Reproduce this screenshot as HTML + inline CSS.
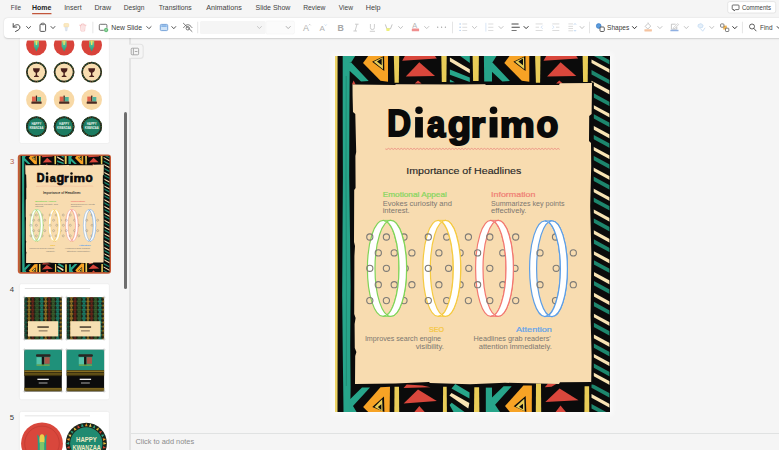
<!DOCTYPE html>
<html lang="en"><head><meta charset="utf-8"><title>PowerPoint</title>
<style>
html,body{margin:0;padding:0;background:#f5f5f5;}
body{width:779px;height:450px;overflow:hidden;position:relative;font-family:"Liberation Sans",sans-serif;}
#app{position:absolute;left:0;top:0;width:779px;height:450px;overflow:hidden;background:#f5f5f5;}
#topbar{position:absolute;left:0;top:0;width:779px;height:17.5px;background:#f5f5f5;}
#ribbon{position:absolute;left:3.9px;top:17.5px;width:790px;height:20.2px;background:#ffffff;border-radius:4px;box-shadow:0 0.5px 1.6px rgba(0,0,0,.16);}
#left{position:absolute;left:0;top:37.7px;width:130px;height:412.3px;background:#f5f5f5;overflow:hidden;}
#divider{position:absolute;left:129.4px;top:37.7px;width:1.2px;height:412.3px;background:#e3e3e3;}
#scroll{position:absolute;left:123.5px;top:112px;width:3.1px;height:177px;border-radius:1.6px;background:#6e6e6e;}
#canvas{position:absolute;left:130.5px;top:37.7px;width:648.5px;height:395.6px;background:#f5f5f5;}
#slidewrap{position:absolute;left:335px;top:56px;width:275px;height:356px;box-shadow:0 0 5px 3px rgba(255,255,255,.6);}
#notes{position:absolute;left:130.5px;top:433.3px;width:648.5px;height:16.7px;background:#f5f5f5;border-top:1.1px solid #e0e2e2;}
svg{position:absolute;left:0;top:0;overflow:hidden;}
svg text{font-family:"Liberation Sans",sans-serif;}
</style></head><body>
<div id="app">
<div id="canvas"></div>
<div id="left"></div>
<div id="divider"></div>
<div id="notes"></div>
<svg id="panel" width="779" height="450" viewBox="0 0 779 450">
<defs>
<linearGradient id="corng" x1="0" y1="0" x2="0" y2="1"><stop offset="0" stop-color="#d8d860"/><stop offset="0.35" stop-color="#56c296"/><stop offset="1" stop-color="#1f9a80"/></linearGradient>
<g id="slideg">
<rect x="0" y="0" width="275" height="356" fill="#0b0b0b"/>
<polygon points="0.0,0.0 2.6,0.0 2.4,120.0 2.7,240.0 2.5,356.0 0.0,356.0" fill="#ecd366" />
<polygon points="18.6,24.4 17.0,28.6 20.6,28.6" fill="#d9473c" />
<polygon points="7.7,0.0 14.8,0.0 14.4,60.0 14.2,120.0 15.0,180.0 15.6,230.0 15.2,290.0 15.6,330.0 15.3,356.0 8.5,356.0 7.8,300.0 7.2,240.0 7.5,180.0 7.9,120.0 7.7,60.0" fill="#27a58a" />
<path d="M11.2 20 L11.0 120 L11.4 220 L11.3 330" stroke="#14705d" stroke-width="0.5" fill="none"/>
<g transform="translate(7.6,0)"><polygon points="6.2,0.0 12.6,0.0 8.5,6.6 6.2,6.6" fill="#27a58a" /><polygon points="6.2,6.5 8.6,6.5 26.1,25.0 18.4,25.4 7.2,15.1 6.2,15.1" fill="#27a58a" /><polygon points="20.4,7.0 25.6,0.0 45.4,0.0 45.4,25.8 37.9,24.8" fill="#f7a325" /><polygon points="29.5,5.8 41.5,0.0 41.7,14.9" fill="#0b0b0b" /><polygon points="31.1,5.8 40.1,1.3 40.4,13.2" fill="#e9cd58" /><polygon points="34.4,5.5 39.1,2.5 39.1,9.2" fill="#0b0b0b" /><polygon points="51.2,0.0 56.6,0.0 56.2,26.7 52.0,26.7" fill="#e9cd58" /><polygon points="59.6,4.7 62.3,0.0 92.4,0.0 94.2,2.5" fill="#d9473c" /><polygon points="76.7,6.3 63.2,20.5 92.4,20.0" fill="#d9473c" /><polygon points="75.4,24.5 72.2,27.6 79.0,27.6" fill="#d9473c" /><polygon points="98.7,0.0 104.1,0.0 103.8,25.9 99.2,25.9" fill="#e9cd58" /><polygon points="107.3,1.6 127.2,13.3 127.2,17.3 107.3,5.6" fill="#f9e4b4" /><polygon points="117.6,0.0 127.2,0.0 127.2,7.0" fill="#27a58a" /><polygon points="107.3,13.4 127.2,21.5 127.2,26.0 107.3,18.7" fill="#27a58a" /><polygon points="107.3,23.6 112.2,26.3 107.3,26.3" fill="#27a58a" /><polygon points="130.0,0.0 136.3,0.0 136.0,25.0 130.5,25.0" fill="#e9cd58" /></g>
<g transform="translate(148.9,0)"><polygon points="0.0,0.0 8.1,0.0 8.1,25.4 0.3,25.4" fill="#27a58a" /><polygon points="6.2,0.0 12.6,0.0 8.5,6.6 6.2,6.6" fill="#27a58a" /><polygon points="6.2,6.5 8.6,6.5 26.1,25.0 18.4,25.4 7.2,15.1 6.2,15.1" fill="#27a58a" /><polygon points="20.4,7.0 25.6,0.0 45.4,0.0 45.4,25.8 37.9,24.8" fill="#f7a325" /><polygon points="29.5,5.8 41.5,0.0 41.7,14.9" fill="#0b0b0b" /><polygon points="31.1,5.8 40.1,1.3 40.4,13.2" fill="#e9cd58" /><polygon points="34.4,5.5 39.1,2.5 39.1,9.2" fill="#0b0b0b" /><polygon points="51.2,0.0 56.6,0.0 56.2,26.7 52.0,26.7" fill="#e9cd58" /><polygon points="59.6,4.7 62.3,0.0 92.4,0.0 94.2,2.5" fill="#d9473c" /><polygon points="76.7,6.3 63.2,20.5 92.4,20.0" fill="#d9473c" /><polygon points="75.4,24.5 72.2,27.6 79.0,27.6" fill="#d9473c" /><polygon points="98.7,0.0 104.1,0.0 103.8,25.9 99.2,25.9" fill="#e9cd58" /></g>
<polygon points="14.2,342.9 15.3,342.9 27.0,331.4 35.0,331.4 18.0,350.0 21.6,356.0 14.2,356.0" fill="#27a58a" />
<polygon points="45.5,331.2 55.0,330.8 54.6,356.0 33.2,356.0 28.1,351.0" fill="#f7a325" />
<polygon points="37.3,351.0 49.0,340.6 49.4,356.0" fill="#0b0b0b" />
<polygon points="39.5,351.0 47.2,343.3 47.6,355.4" fill="#e9cd58" />
<polygon points="42.9,351.0 46.3,348.3 46.3,354.1" fill="#0b0b0b" />
<polygon points="59.5,330.7 64.0,330.7 64.2,356.0 59.3,356.0" fill="#e9cd58" />
<polygon points="68.6,332.1 71.7,328.5 87.5,329.4 95.5,331.2" fill="#d9473c" />
<polygon points="83.0,333.4 68.6,347.4 101.8,345.1" fill="#d9473c" />
<polygon points="84.3,350.0 79.4,356.0 89.7,356.0" fill="#d9473c" />
<polygon points="108.1,330.7 111.7,330.7 111.9,356.0 107.9,356.0" fill="#e9cd58" />
<polygon points="116.5,332.5 120.3,328.0 134.6,336.5 134.4,342.5" fill="#27a58a" />
<polygon points="114.4,339.5 116.5,337.0 134.4,347.0 133.3,352.5" fill="#f9e4b4" />
<polygon points="114.6,349.0 116.7,346.8 129.5,356.0 118.5,356.0" fill="#27a58a" />
<polygon points="139.3,331.2 144.1,331.2 144.4,356.0 139.0,356.0" fill="#e9cd58" />
<polygon points="150.8,331.6 157.0,331.6 157.0,356.0 150.8,356.0" fill="#27a58a" />
<polygon points="157.0,341.5 168.6,330.3 176.7,330.3 160.1,348.7 165.0,356.0 157.0,356.0" fill="#27a58a" />
<polygon points="188.4,329.4 196.9,329.4 196.8,356.0 174.9,356.0 170.0,350.0" fill="#f7a325" />
<polygon points="178.7,350.3 190.7,340.0 191.3,356.0" fill="#0b0b0b" />
<polygon points="180.7,350.7 189.3,342.7 189.7,355.3" fill="#e9cd58" />
<polygon points="184.0,350.7 188.0,347.7 188.0,353.3" fill="#0b0b0b" />
<polygon points="201.0,327.6 206.0,327.6 206.2,356.0 200.8,356.0" fill="#e9cd58" />
<polygon points="209.8,331.2 213.0,327.6 222.0,327.6 216.6,330.7" fill="#d9473c" />
<polygon points="224.6,332.5 210.3,346.0 243.5,344.2" fill="#d9473c" />
<polygon points="225.5,349.6 220.6,356.0 230.9,356.0" fill="#d9473c" />
<polygon points="249.6,330.3 254.1,330.3 254.3,356.0 249.4,356.0" fill="#e9cd58" />
<polygon points="256.5,-5.6 274.7,4.2 274.7,8.6 256.5,-1.3" fill="#1d866d" />
<polygon points="256.5,-14.6 274.7,-4.8 274.7,-1.0 256.5,-11.0" fill="#f9e4b4" />
<polygon points="256.5,14.1 274.7,23.9 274.7,28.3 256.5,18.4" fill="#1d866d" />
<polygon points="256.5,3.5 274.7,13.3 274.7,17.1 256.5,7.1" fill="#f9e4b4" />
<polygon points="256.5,36.1 274.7,45.9 274.7,50.3 256.5,40.4" fill="#1d866d" />
<polygon points="256.5,24.8 274.7,34.6 274.7,38.4 256.5,28.4" fill="#f9e4b4" />
<polygon points="256.5,57.0 274.7,66.8 274.7,71.2 256.5,61.3" fill="#1d866d" />
<polygon points="256.5,48.0 274.7,57.8 274.7,61.6 256.5,51.6" fill="#f9e4b4" />
<polygon points="256.5,77.8 274.7,87.6 274.7,92.0 256.5,82.1" fill="#1d866d" />
<polygon points="256.5,68.8 274.7,78.6 274.7,82.4 256.5,72.4" fill="#f9e4b4" />
<polygon points="256.5,98.7 274.7,108.5 274.7,112.9 256.5,103.0" fill="#1d866d" />
<polygon points="256.5,89.7 274.7,99.5 274.7,103.3 256.5,93.3" fill="#f9e4b4" />
<polygon points="256.5,119.5 274.7,129.3 274.7,133.7 256.5,123.8" fill="#1d866d" />
<polygon points="256.5,110.5 274.7,120.3 274.7,124.1 256.5,114.1" fill="#f9e4b4" />
<polygon points="256.5,140.4 274.7,150.2 274.7,154.6 256.5,144.7" fill="#1d866d" />
<polygon points="256.5,131.4 274.7,141.2 274.7,145.0 256.5,135.0" fill="#f9e4b4" />
<polygon points="256.5,161.2 274.7,171.0 274.7,175.4 256.5,165.5" fill="#1d866d" />
<polygon points="256.5,152.2 274.7,162.0 274.7,165.8 256.5,155.8" fill="#f9e4b4" />
<polygon points="256.5,182.1 274.7,191.9 274.7,196.3 256.5,186.4" fill="#1d866d" />
<polygon points="256.5,173.1 274.7,182.9 274.7,186.7 256.5,176.7" fill="#f9e4b4" />
<polygon points="256.5,202.9 274.7,212.7 274.7,217.1 256.5,207.2" fill="#1d866d" />
<polygon points="256.5,193.9 274.7,203.7 274.7,207.5 256.5,197.5" fill="#f9e4b4" />
<polygon points="256.5,223.8 274.7,233.6 274.7,238.0 256.5,228.1" fill="#1d866d" />
<polygon points="256.5,214.8 274.7,224.6 274.7,228.4 256.5,218.4" fill="#f9e4b4" />
<polygon points="256.5,244.6 274.7,254.4 274.7,258.8 256.5,248.9" fill="#1d866d" />
<polygon points="256.5,235.6 274.7,245.4 274.7,249.2 256.5,239.2" fill="#f9e4b4" />
<polygon points="256.5,265.5 274.7,275.3 274.7,279.7 256.5,269.8" fill="#1d866d" />
<polygon points="256.5,256.5 274.7,266.3 274.7,270.1 256.5,260.1" fill="#f9e4b4" />
<polygon points="256.5,286.3 274.7,296.1 274.7,300.5 256.5,290.6" fill="#1d866d" />
<polygon points="256.5,277.3 274.7,287.1 274.7,290.9 256.5,280.9" fill="#f9e4b4" />
<polygon points="256.5,306.2 274.7,316.0 274.7,320.4 256.5,310.5" fill="#1d866d" />
<polygon points="256.5,296.7 274.7,306.5 274.7,310.3 256.5,300.3" fill="#f9e4b4" />
<polygon points="256.5,327.5 274.7,337.3 274.7,341.7 256.5,331.8" fill="#1d866d" />
<polygon points="256.5,315.5 274.7,325.3 274.7,329.1 256.5,319.1" fill="#f9e4b4" />
<polygon points="256.5,348.1 274.7,357.9 274.7,362.3 256.5,352.4" fill="#1d866d" />
<polygon points="256.5,338.1 274.7,347.9 274.7,351.7 256.5,341.7" fill="#f9e4b4" />
<polygon points="256.5,369.7 274.7,379.5 274.7,383.9 256.5,374.0" fill="#1d866d" />
<polygon points="256.5,360.7 274.7,370.5 274.7,374.3 256.5,364.3" fill="#f9e4b4" />
<rect x="274.6" y="0" width="0.4" height="356" fill="#0b0b0b"/>
<polygon points="255.5,26.5 258.9,26.5 258.7,120.0 259.0,220.0 258.8,328.5 255.5,328.5" fill="#0b0b0b" />
<polygon points="17.5,28.6 60.0,28.9 61.0,28.3 120.0,28.6 150.0,28.2 151.0,28.9 224.0,29.0 225.0,27.2 257.0,26.9 256.6,58.0 254.2,60.0 254.0,85.0 256.0,87.0 256.2,110.0 255.2,150.0 256.4,200.0 255.6,260.0 256.6,300.0 256.2,326.0 225.0,326.2 224.0,328.0 170.0,326.8 135.0,328.3 95.0,327.0 94.0,326.0 60.0,327.6 20.0,327.9 20.2,300.0 21.4,296.0 19.8,292.0 19.6,268.0 20.6,262.0 19.2,258.0 19.4,200.0 20.0,190.0 19.0,186.0 19.2,134.0 20.6,132.0 20.4,100.0 21.2,96.0 20.3,58.0 18.0,56.0 17.6,40.0" fill="#f8dcb0" />
<text transform="matrix(0.3281 0 0 0.3661 52.25 80.45)" x="0" y="0" font-size="100" font-weight="bold" fill="#0a0a0a" stroke="#0a0a0a" stroke-width="5.76" stroke-linejoin="miter">D</text>
<rect x="80.1" y="61.1" width="7.8" height="20.4" fill="#0a0a0a"/>
<circle cx="84.00" cy="54.3" r="3.75" fill="#0a0a0a"/>
<text transform="matrix(0.3283 0 0 0.3614 91.90 80.69)" x="0" y="0" font-size="100" font-weight="bold" fill="#0a0a0a" stroke="#0a0a0a" stroke-width="5.80" stroke-linejoin="miter">a</text>
<text transform="matrix(0.3832 0 0 0.3732 112.74 81.30)" x="0" y="0" font-size="100" font-weight="bold" fill="#0a0a0a" stroke="#0a0a0a" stroke-width="5.29" stroke-linejoin="miter">g</text>
<text transform="matrix(0.3722 0 0 0.3588 135.66 80.52)" x="0" y="0" font-size="100" font-weight="bold" fill="#0a0a0a" stroke="#0a0a0a" stroke-width="5.47" stroke-linejoin="miter">r</text>
<rect x="154.6" y="61.1" width="7.9" height="20.4" fill="#0a0a0a"/>
<circle cx="158.55" cy="54.3" r="3.75" fill="#0a0a0a"/>
<text transform="matrix(0.3943 0 0 0.3598 164.84 80.55)" x="0" y="0" font-size="100" font-weight="bold" fill="#0a0a0a" stroke="#0a0a0a" stroke-width="5.30" stroke-linejoin="miter">m</text>
<text transform="matrix(0.3568 0 0 0.3628 201.40 80.73)" x="0" y="0" font-size="100" font-weight="bold" fill="#0a0a0a" stroke="#0a0a0a" stroke-width="5.56" stroke-linejoin="miter">o</text>
<path d="M50.3 92.9 L51.9 93.45 L53.5 92.35 L55.1 93.45 L56.7 92.35 L58.3 93.45 L59.9 92.35 L61.5 93.45 L63.1 92.35 L64.7 93.45 L66.3 92.35 L67.9 93.45 L69.5 92.35 L71.1 93.45 L72.7 92.35 L74.3 93.45 L75.9 92.35 L77.5 93.45 L79.1 92.35 L80.7 93.45 L82.3 92.35 L83.9 93.45 L85.5 92.35 L87.1 93.45 L88.7 92.35 L90.3 93.45 L91.9 92.35 L93.5 93.45 L95.1 92.35 L96.7 93.45 L98.3 92.35 L99.9 93.45 L101.5 92.35 L103.1 93.45 L104.7 92.35 L106.3 93.45 L107.9 92.35 L109.5 93.45 L111.1 92.35 L112.7 93.45 L114.3 92.35 L115.9 93.45 L117.5 92.35 L119.1 93.45 L120.7 92.35 L122.3 93.45 L123.9 92.35 L125.5 93.45 L127.1 92.35 L128.7 93.45 L130.3 92.35 L131.9 93.45 L133.5 92.35 L135.1 93.45 L136.7 92.35 L138.3 93.45 L139.9 92.35 L141.5 93.45 L143.1 92.35 L144.7 93.45 L146.3 92.35 L147.9 93.45 L149.5 92.35 L151.1 93.45 L152.7 92.35 L154.3 93.45 L155.9 92.35 L157.5 93.45 L159.1 92.35 L160.7 93.45 L162.3 92.35 L163.9 93.45 L165.5 92.35 L167.1 93.45 L168.7 92.35 L170.3 93.45 L171.9 92.35 L173.5 93.45 L175.1 92.35 L176.7 93.45 L178.3 92.35 L179.9 93.45 L181.5 92.35 L183.1 93.45 L184.7 92.35 L186.3 93.45 L187.9 92.35 L189.5 93.45 L191.1 92.35 L192.7 93.45 L194.3 92.35 L195.9 93.45 L197.5 92.35 L199.1 93.45 L200.7 92.35 L202.3 93.45 L203.9 92.35 L205.5 93.45 L207.1 92.35 L208.7 93.45 L210.3 92.35 L211.9 93.45 L213.5 92.35 L215.1 93.45 L216.7 92.35 L218.3 93.45 L219.9 92.35 L221.5 93.45 L223.1 92.35 L224.7 93.45" fill="none" stroke="#ea827b" stroke-width="0.75"/>
<text x="71.3" y="117.5" font-size="9.4" fill="#262626" text-anchor="start" font-weight="normal" font-style="normal" textLength="115.0" lengthAdjust="spacingAndGlyphs" stroke="#262626" stroke-width="0.12">Importance of Headlines</text>
<text x="47.7" y="141.3" font-size="7.2" fill="#86d65e" text-anchor="start" font-weight="normal" font-style="normal" textLength="64.2" lengthAdjust="spacingAndGlyphs" stroke="#86d65e" stroke-width="0.2">Emotional Appeal</text>
<text x="47.7" y="149.6" font-size="6.6" fill="#7d7870" text-anchor="start" font-weight="normal" font-style="normal" textLength="69.3" lengthAdjust="spacingAndGlyphs" >Evokes curiosity and</text>
<text x="47.7" y="157.0" font-size="6.6" fill="#7d7870" text-anchor="start" font-weight="normal" font-style="normal" textLength="27.0" lengthAdjust="spacingAndGlyphs" >interest.</text>
<text x="156.0" y="141.3" font-size="7.2" fill="#f07f74" text-anchor="start" font-weight="normal" font-style="normal" textLength="44.5" lengthAdjust="spacingAndGlyphs" stroke="#f07f74" stroke-width="0.2">Information</text>
<text x="156.0" y="149.6" font-size="6.6" fill="#7d7870" text-anchor="start" font-weight="normal" font-style="normal" textLength="73.5" lengthAdjust="spacingAndGlyphs" >Summarizes key points</text>
<text x="156.0" y="157.0" font-size="6.6" fill="#7d7870" text-anchor="start" font-weight="normal" font-style="normal" textLength="35.5" lengthAdjust="spacingAndGlyphs" >effectively.</text>
<text x="94.0" y="276.3" font-size="7.2" fill="#f5c63c" text-anchor="start" font-weight="normal" font-style="normal" textLength="15.0" lengthAdjust="spacingAndGlyphs" stroke="#f5c63c" stroke-width="0.2">SEO</text>
<text x="29.9" y="285.4" font-size="6.6" fill="#7d7870" text-anchor="start" font-weight="normal" font-style="normal" textLength="76.2" lengthAdjust="spacingAndGlyphs" >Improves search engine</text>
<text x="80.7" y="293.0" font-size="6.6" fill="#7d7870" text-anchor="start" font-weight="normal" font-style="normal" textLength="28.3" lengthAdjust="spacingAndGlyphs" >visibility.</text>
<text x="181.0" y="276.3" font-size="7.2" fill="#62a3ea" text-anchor="start" font-weight="normal" font-style="normal" textLength="35.8" lengthAdjust="spacingAndGlyphs" stroke="#62a3ea" stroke-width="0.2">Attention</text>
<text x="138.6" y="285.4" font-size="6.6" fill="#7d7870" text-anchor="start" font-weight="normal" font-style="normal" textLength="77.1" lengthAdjust="spacingAndGlyphs" >Headlines grab readers'</text>
<text x="143.7" y="293.0" font-size="6.6" fill="#7d7870" text-anchor="start" font-weight="normal" font-style="normal" textLength="73.1" lengthAdjust="spacingAndGlyphs" >attention immediately.</text>
<path d="M32.4 212.4A15.8 48.0 0 1 0 64.0 212.4A15.8 48.0 0 1 0 32.4 212.4ZM40.0 212.4A15.8 48.0 0 1 0 71.6 212.4A15.8 48.0 0 1 0 40.0 212.4Z" fill="#ffffff" fill-rule="evenodd" stroke="#80d458" stroke-width="1.2"/>
<path d="M48.2 164.4L55.8 164.4L52.0 165.8Z" fill="#ffffff" stroke="#80d458" stroke-width="0.9" stroke-linejoin="round"/>
<path d="M48.2 260.4L55.8 260.4L52.0 259.0Z" fill="#ffffff" stroke="#80d458" stroke-width="0.9" stroke-linejoin="round"/>
<path d="M87.9 212.4A15.2 48.0 0 1 0 118.3 212.4A15.2 48.0 0 1 0 87.9 212.4ZM95.3 212.4A15.2 48.0 0 1 0 125.7 212.4A15.2 48.0 0 1 0 95.3 212.4Z" fill="#ffffff" fill-rule="evenodd" stroke="#f5ca40" stroke-width="1.2"/>
<path d="M103.1 164.4L110.5 164.4L106.8 165.8Z" fill="#ffffff" stroke="#f5ca40" stroke-width="0.9" stroke-linejoin="round"/>
<path d="M103.1 260.4L110.5 260.4L106.8 259.0Z" fill="#ffffff" stroke="#f5ca40" stroke-width="0.9" stroke-linejoin="round"/>
<path d="M140.6 212.4A15.2 48.0 0 1 0 171.0 212.4A15.2 48.0 0 1 0 140.6 212.4ZM148.0 212.4A15.2 48.0 0 1 0 178.4 212.4A15.2 48.0 0 1 0 148.0 212.4Z" fill="#ffffff" fill-rule="evenodd" stroke="#f2776f" stroke-width="1.2"/>
<path d="M155.8 164.4L163.2 164.4L159.5 165.8Z" fill="#ffffff" stroke="#f2776f" stroke-width="0.9" stroke-linejoin="round"/>
<path d="M155.8 260.4L163.2 260.4L159.5 259.0Z" fill="#ffffff" stroke="#f2776f" stroke-width="0.9" stroke-linejoin="round"/>
<path d="M194.6 212.7A15.4 47.8 0 1 0 225.4 212.7A15.4 47.8 0 1 0 194.6 212.7ZM201.6 212.7A15.4 47.8 0 1 0 232.4 212.7A15.4 47.8 0 1 0 201.6 212.7Z" fill="#ffffff" fill-rule="evenodd" stroke="#5c9ee6" stroke-width="1.2"/>
<path d="M210.0 164.9L217.0 164.9L213.5 166.2Z" fill="#ffffff" stroke="#5c9ee6" stroke-width="0.9" stroke-linejoin="round"/>
<path d="M210.0 260.5L217.0 260.5L213.5 259.2Z" fill="#ffffff" stroke="#5c9ee6" stroke-width="0.9" stroke-linejoin="round"/>
<circle cx="34.8" cy="181.0" r="3.1" fill="none" stroke="#7e7b76" stroke-width="1.1"/>
<circle cx="51.4" cy="181.0" r="3.1" fill="none" stroke="#7e7b76" stroke-width="1.1"/>
<circle cx="69.0" cy="181.0" r="3.1" fill="none" stroke="#7e7b76" stroke-width="1.1"/>
<circle cx="93.3" cy="181.0" r="3.1" fill="none" stroke="#7e7b76" stroke-width="1.1"/>
<circle cx="111.7" cy="181.0" r="3.1" fill="none" stroke="#7e7b76" stroke-width="1.1"/>
<circle cx="133.4" cy="181.0" r="3.1" fill="none" stroke="#7e7b76" stroke-width="1.1"/>
<circle cx="154.8" cy="181.0" r="3.1" fill="none" stroke="#7e7b76" stroke-width="1.1"/>
<circle cx="180.7" cy="181.0" r="3.1" fill="none" stroke="#7e7b76" stroke-width="1.1"/>
<circle cx="220.5" cy="181.0" r="3.1" fill="none" stroke="#7e7b76" stroke-width="1.1"/>
<circle cx="43.3" cy="196.9" r="3.1" fill="none" stroke="#7e7b76" stroke-width="1.1"/>
<circle cx="59.2" cy="196.9" r="3.1" fill="none" stroke="#7e7b76" stroke-width="1.1"/>
<circle cx="76.9" cy="196.9" r="3.1" fill="none" stroke="#7e7b76" stroke-width="1.1"/>
<circle cx="103.9" cy="196.9" r="3.1" fill="none" stroke="#7e7b76" stroke-width="1.1"/>
<circle cx="125.1" cy="196.9" r="3.1" fill="none" stroke="#7e7b76" stroke-width="1.1"/>
<circle cx="142.6" cy="196.9" r="3.1" fill="none" stroke="#7e7b76" stroke-width="1.1"/>
<circle cx="167.8" cy="196.9" r="3.1" fill="none" stroke="#7e7b76" stroke-width="1.1"/>
<circle cx="205.0" cy="196.9" r="3.1" fill="none" stroke="#7e7b76" stroke-width="1.1"/>
<circle cx="238.3" cy="196.9" r="3.1" fill="none" stroke="#7e7b76" stroke-width="1.1"/>
<circle cx="34.8" cy="212.3" r="3.1" fill="none" stroke="#7e7b76" stroke-width="1.1"/>
<circle cx="51.4" cy="212.3" r="3.1" fill="none" stroke="#7e7b76" stroke-width="1.1"/>
<circle cx="70.2" cy="212.3" r="3.1" fill="none" stroke="#7e7b76" stroke-width="1.1"/>
<circle cx="93.3" cy="212.3" r="3.1" fill="none" stroke="#7e7b76" stroke-width="1.1"/>
<circle cx="113.6" cy="212.3" r="3.1" fill="none" stroke="#7e7b76" stroke-width="1.1"/>
<circle cx="133.8" cy="212.3" r="3.1" fill="none" stroke="#7e7b76" stroke-width="1.1"/>
<circle cx="154.8" cy="212.3" r="3.1" fill="none" stroke="#7e7b76" stroke-width="1.1"/>
<circle cx="180.0" cy="212.3" r="3.1" fill="none" stroke="#7e7b76" stroke-width="1.1"/>
<circle cx="221.2" cy="212.3" r="3.1" fill="none" stroke="#7e7b76" stroke-width="1.1"/>
<circle cx="43.3" cy="228.7" r="3.1" fill="none" stroke="#7e7b76" stroke-width="1.1"/>
<circle cx="59.2" cy="228.7" r="3.1" fill="none" stroke="#7e7b76" stroke-width="1.1"/>
<circle cx="76.9" cy="228.7" r="3.1" fill="none" stroke="#7e7b76" stroke-width="1.1"/>
<circle cx="103.9" cy="228.7" r="3.1" fill="none" stroke="#7e7b76" stroke-width="1.1"/>
<circle cx="125.1" cy="228.7" r="3.1" fill="none" stroke="#7e7b76" stroke-width="1.1"/>
<circle cx="142.6" cy="228.7" r="3.1" fill="none" stroke="#7e7b76" stroke-width="1.1"/>
<circle cx="167.8" cy="228.7" r="3.1" fill="none" stroke="#7e7b76" stroke-width="1.1"/>
<circle cx="205.0" cy="228.7" r="3.1" fill="none" stroke="#7e7b76" stroke-width="1.1"/>
<circle cx="238.3" cy="228.7" r="3.1" fill="none" stroke="#7e7b76" stroke-width="1.1"/>
<circle cx="34.8" cy="244.6" r="3.1" fill="none" stroke="#7e7b76" stroke-width="1.1"/>
<circle cx="51.4" cy="244.6" r="3.1" fill="none" stroke="#7e7b76" stroke-width="1.1"/>
<circle cx="69.0" cy="244.6" r="3.1" fill="none" stroke="#7e7b76" stroke-width="1.1"/>
<circle cx="93.3" cy="244.6" r="3.1" fill="none" stroke="#7e7b76" stroke-width="1.1"/>
<circle cx="111.7" cy="244.6" r="3.1" fill="none" stroke="#7e7b76" stroke-width="1.1"/>
<circle cx="133.4" cy="244.6" r="3.1" fill="none" stroke="#7e7b76" stroke-width="1.1"/>
<circle cx="154.8" cy="244.6" r="3.1" fill="none" stroke="#7e7b76" stroke-width="1.1"/>
<circle cx="180.7" cy="244.6" r="3.1" fill="none" stroke="#7e7b76" stroke-width="1.1"/>
<circle cx="220.5" cy="244.6" r="3.1" fill="none" stroke="#7e7b76" stroke-width="1.1"/>
<clipPath id="rc0"><rect x="52.0" y="150" width="30" height="120"/></clipPath>
<path clip-path="url(#rc0)" d="M32.4 212.4A15.8 48.0 0 1 0 64.0 212.4A15.8 48.0 0 1 0 32.4 212.4ZM40.0 212.4A15.8 48.0 0 1 0 71.6 212.4A15.8 48.0 0 1 0 40.0 212.4Z" fill="#ffffff" fill-rule="evenodd" stroke="#80d458" stroke-width="1.2"/>
<clipPath id="rc1"><rect x="106.8" y="150" width="30" height="120"/></clipPath>
<path clip-path="url(#rc1)" d="M87.9 212.4A15.2 48.0 0 1 0 118.3 212.4A15.2 48.0 0 1 0 87.9 212.4ZM95.3 212.4A15.2 48.0 0 1 0 125.7 212.4A15.2 48.0 0 1 0 95.3 212.4Z" fill="#ffffff" fill-rule="evenodd" stroke="#f5ca40" stroke-width="1.2"/>
<clipPath id="rc2"><rect x="159.5" y="150" width="30" height="120"/></clipPath>
<path clip-path="url(#rc2)" d="M140.6 212.4A15.2 48.0 0 1 0 171.0 212.4A15.2 48.0 0 1 0 140.6 212.4ZM148.0 212.4A15.2 48.0 0 1 0 178.4 212.4A15.2 48.0 0 1 0 148.0 212.4Z" fill="#ffffff" fill-rule="evenodd" stroke="#f2776f" stroke-width="1.2"/>
<clipPath id="rc3"><rect x="213.5" y="150" width="30" height="120"/></clipPath>
<path clip-path="url(#rc3)" d="M194.6 212.7A15.4 47.8 0 1 0 225.4 212.7A15.4 47.8 0 1 0 194.6 212.7ZM201.6 212.7A15.4 47.8 0 1 0 232.4 212.7A15.4 47.8 0 1 0 201.6 212.7Z" fill="#ffffff" fill-rule="evenodd" stroke="#5c9ee6" stroke-width="1.2"/>
</g>
</defs>
<rect x="19.4" y="27" width="90" height="116.5" rx="2" fill="#ffffff" stroke="#ebebeb" stroke-width="0.7"/>
<clipPath id="t2c"><rect x="19" y="40.4" width="91" height="104"/></clipPath><g clip-path="url(#t2c)">
<circle cx="36.4" cy="45.1" r="10.3" fill="#d8433a"/>
<path d="M33.9 40h5.0v6.6l-2.5 4.8-2.5-4.8z" fill="url(#corng)"/>
<rect x="35.699999999999996" y="40" width="1.4" height="5" rx="0.6" fill="#efe066"/>
<circle cx="36.4" cy="72.1" r="10.3" fill="#f8ddb0"/>
<circle cx="36.4" cy="72.1" r="9.55" fill="none" stroke="#1c2a1c" stroke-width="1.7"/><circle cx="45.95" cy="72.10" r="0.46" fill="#e0b93a" opacity="0.8"/><circle cx="45.67" cy="74.39" r="0.46" fill="#c8442f" opacity="0.8"/><circle cx="44.86" cy="76.54" r="0.46" fill="#2aa58a" opacity="0.8"/><circle cx="43.55" cy="78.43" r="0.46" fill="#e88a2a" opacity="0.8"/><circle cx="41.83" cy="79.96" r="0.46" fill="#d8c25a" opacity="0.8"/><circle cx="39.79" cy="81.03" r="0.46" fill="#2f8f6a" opacity="0.8"/><circle cx="37.55" cy="81.58" r="0.46" fill="#e0b93a" opacity="0.8"/><circle cx="35.25" cy="81.58" r="0.46" fill="#c8442f" opacity="0.8"/><circle cx="33.01" cy="81.03" r="0.46" fill="#2aa58a" opacity="0.8"/><circle cx="30.97" cy="79.96" r="0.46" fill="#e88a2a" opacity="0.8"/><circle cx="29.25" cy="78.43" r="0.46" fill="#d8c25a" opacity="0.8"/><circle cx="27.94" cy="76.54" r="0.46" fill="#2f8f6a" opacity="0.8"/><circle cx="27.13" cy="74.39" r="0.46" fill="#e0b93a" opacity="0.8"/><circle cx="26.85" cy="72.10" r="0.46" fill="#c8442f" opacity="0.8"/><circle cx="27.13" cy="69.81" r="0.46" fill="#2aa58a" opacity="0.8"/><circle cx="27.94" cy="67.66" r="0.46" fill="#e88a2a" opacity="0.8"/><circle cx="29.25" cy="65.77" r="0.46" fill="#d8c25a" opacity="0.8"/><circle cx="30.97" cy="64.24" r="0.46" fill="#2f8f6a" opacity="0.8"/><circle cx="33.01" cy="63.17" r="0.46" fill="#e0b93a" opacity="0.8"/><circle cx="35.25" cy="62.62" r="0.46" fill="#c8442f" opacity="0.8"/><circle cx="37.55" cy="62.62" r="0.46" fill="#2aa58a" opacity="0.8"/><circle cx="39.79" cy="63.17" r="0.46" fill="#e88a2a" opacity="0.8"/><circle cx="41.83" cy="64.24" r="0.46" fill="#d8c25a" opacity="0.8"/><circle cx="43.55" cy="65.77" r="0.46" fill="#2f8f6a" opacity="0.8"/><circle cx="44.86" cy="67.66" r="0.46" fill="#e0b93a" opacity="0.8"/><circle cx="45.67" cy="69.81" r="0.46" fill="#c8442f" opacity="0.8"/>
<path d="M33.0 68.2h6.8c0 2.9-1.5 4.2-2.7 4.5v2.5l1.7 1.0v.7h-4.8v-.7l1.7-1.0v-2.5c-1.2-.3-2.7-1.6-2.7-4.5z" fill="#4a201c"/>
<circle cx="36.4" cy="99.8" r="10.3" fill="#f8d9a6"/>
<rect x="32.0" y="96.6" width="3.7" height="5.0" fill="#e0604a"/>
<rect x="35.8" y="95.6" width="1.3" height="6.0" fill="#3a2622"/>
<rect x="37.199999999999996" y="97.0" width="3.8" height="4.6" fill="#4fb39a"/>
<rect x="31.4" y="101.4" width="10.2" height="2.4" rx="0.5" fill="#4a2a22"/>
<circle cx="36.4" cy="126.7" r="10.3" fill="#1c7c61"/>
<circle cx="36.4" cy="126.7" r="9.55" fill="none" stroke="#1c2a1c" stroke-width="1.7"/><circle cx="45.95" cy="126.70" r="0.46" fill="#e0b93a" opacity="0.8"/><circle cx="45.67" cy="128.99" r="0.46" fill="#c8442f" opacity="0.8"/><circle cx="44.86" cy="131.14" r="0.46" fill="#2aa58a" opacity="0.8"/><circle cx="43.55" cy="133.03" r="0.46" fill="#e88a2a" opacity="0.8"/><circle cx="41.83" cy="134.56" r="0.46" fill="#d8c25a" opacity="0.8"/><circle cx="39.79" cy="135.63" r="0.46" fill="#2f8f6a" opacity="0.8"/><circle cx="37.55" cy="136.18" r="0.46" fill="#e0b93a" opacity="0.8"/><circle cx="35.25" cy="136.18" r="0.46" fill="#c8442f" opacity="0.8"/><circle cx="33.01" cy="135.63" r="0.46" fill="#2aa58a" opacity="0.8"/><circle cx="30.97" cy="134.56" r="0.46" fill="#e88a2a" opacity="0.8"/><circle cx="29.25" cy="133.03" r="0.46" fill="#d8c25a" opacity="0.8"/><circle cx="27.94" cy="131.14" r="0.46" fill="#2f8f6a" opacity="0.8"/><circle cx="27.13" cy="128.99" r="0.46" fill="#e0b93a" opacity="0.8"/><circle cx="26.85" cy="126.70" r="0.46" fill="#c8442f" opacity="0.8"/><circle cx="27.13" cy="124.41" r="0.46" fill="#2aa58a" opacity="0.8"/><circle cx="27.94" cy="122.26" r="0.46" fill="#e88a2a" opacity="0.8"/><circle cx="29.25" cy="120.37" r="0.46" fill="#d8c25a" opacity="0.8"/><circle cx="30.97" cy="118.84" r="0.46" fill="#2f8f6a" opacity="0.8"/><circle cx="33.01" cy="117.77" r="0.46" fill="#e0b93a" opacity="0.8"/><circle cx="35.25" cy="117.22" r="0.46" fill="#c8442f" opacity="0.8"/><circle cx="37.55" cy="117.22" r="0.46" fill="#2aa58a" opacity="0.8"/><circle cx="39.79" cy="117.77" r="0.46" fill="#e88a2a" opacity="0.8"/><circle cx="41.83" cy="118.84" r="0.46" fill="#d8c25a" opacity="0.8"/><circle cx="43.55" cy="120.37" r="0.46" fill="#2f8f6a" opacity="0.8"/><circle cx="44.86" cy="122.26" r="0.46" fill="#e0b93a" opacity="0.8"/><circle cx="45.67" cy="124.41" r="0.46" fill="#c8442f" opacity="0.8"/>
<text x="36.4" y="124.9" font-size="2.7" fill="#e8f3ec" text-anchor="middle" font-weight="bold" font-style="normal" textLength="10.0" lengthAdjust="spacingAndGlyphs" >HAPPY</text>
<text x="36.4" y="128.7" font-size="2.7" fill="#e8f3ec" text-anchor="middle" font-weight="bold" font-style="normal" textLength="14.0" lengthAdjust="spacingAndGlyphs" >KWANZAA</text>
<circle cx="64.1" cy="45.1" r="10.3" fill="#d8433a"/>
<path d="M61.599999999999994 40h5.0v6.6l-2.5 4.8-2.5-4.8z" fill="url(#corng)"/>
<rect x="63.39999999999999" y="40" width="1.4" height="5" rx="0.6" fill="#efe066"/>
<circle cx="64.1" cy="72.1" r="10.3" fill="#f8ddb0"/>
<circle cx="64.1" cy="72.1" r="9.55" fill="none" stroke="#1c2a1c" stroke-width="1.7"/><circle cx="73.65" cy="72.10" r="0.46" fill="#e0b93a" opacity="0.8"/><circle cx="73.37" cy="74.39" r="0.46" fill="#c8442f" opacity="0.8"/><circle cx="72.56" cy="76.54" r="0.46" fill="#2aa58a" opacity="0.8"/><circle cx="71.25" cy="78.43" r="0.46" fill="#e88a2a" opacity="0.8"/><circle cx="69.53" cy="79.96" r="0.46" fill="#d8c25a" opacity="0.8"/><circle cx="67.49" cy="81.03" r="0.46" fill="#2f8f6a" opacity="0.8"/><circle cx="65.25" cy="81.58" r="0.46" fill="#e0b93a" opacity="0.8"/><circle cx="62.95" cy="81.58" r="0.46" fill="#c8442f" opacity="0.8"/><circle cx="60.71" cy="81.03" r="0.46" fill="#2aa58a" opacity="0.8"/><circle cx="58.67" cy="79.96" r="0.46" fill="#e88a2a" opacity="0.8"/><circle cx="56.95" cy="78.43" r="0.46" fill="#d8c25a" opacity="0.8"/><circle cx="55.64" cy="76.54" r="0.46" fill="#2f8f6a" opacity="0.8"/><circle cx="54.83" cy="74.39" r="0.46" fill="#e0b93a" opacity="0.8"/><circle cx="54.55" cy="72.10" r="0.46" fill="#c8442f" opacity="0.8"/><circle cx="54.83" cy="69.81" r="0.46" fill="#2aa58a" opacity="0.8"/><circle cx="55.64" cy="67.66" r="0.46" fill="#e88a2a" opacity="0.8"/><circle cx="56.95" cy="65.77" r="0.46" fill="#d8c25a" opacity="0.8"/><circle cx="58.67" cy="64.24" r="0.46" fill="#2f8f6a" opacity="0.8"/><circle cx="60.71" cy="63.17" r="0.46" fill="#e0b93a" opacity="0.8"/><circle cx="62.95" cy="62.62" r="0.46" fill="#c8442f" opacity="0.8"/><circle cx="65.25" cy="62.62" r="0.46" fill="#2aa58a" opacity="0.8"/><circle cx="67.49" cy="63.17" r="0.46" fill="#e88a2a" opacity="0.8"/><circle cx="69.53" cy="64.24" r="0.46" fill="#d8c25a" opacity="0.8"/><circle cx="71.25" cy="65.77" r="0.46" fill="#2f8f6a" opacity="0.8"/><circle cx="72.56" cy="67.66" r="0.46" fill="#e0b93a" opacity="0.8"/><circle cx="73.37" cy="69.81" r="0.46" fill="#c8442f" opacity="0.8"/>
<path d="M60.699999999999996 68.2h6.8c0 2.9-1.5 4.2-2.7 4.5v2.5l1.7 1.0v.7h-4.8v-.7l1.7-1.0v-2.5c-1.2-.3-2.7-1.6-2.7-4.5z" fill="#4a201c"/>
<circle cx="64.1" cy="99.8" r="10.3" fill="#f8d9a6"/>
<rect x="59.699999999999996" y="96.6" width="3.7" height="5.0" fill="#e0604a"/>
<rect x="63.49999999999999" y="95.6" width="1.3" height="6.0" fill="#3a2622"/>
<rect x="64.89999999999999" y="97.0" width="3.8" height="4.6" fill="#4fb39a"/>
<rect x="59.099999999999994" y="101.4" width="10.2" height="2.4" rx="0.5" fill="#4a2a22"/>
<circle cx="64.1" cy="126.7" r="10.3" fill="#1c7c61"/>
<circle cx="64.1" cy="126.7" r="9.55" fill="none" stroke="#1c2a1c" stroke-width="1.7"/><circle cx="73.65" cy="126.70" r="0.46" fill="#e0b93a" opacity="0.8"/><circle cx="73.37" cy="128.99" r="0.46" fill="#c8442f" opacity="0.8"/><circle cx="72.56" cy="131.14" r="0.46" fill="#2aa58a" opacity="0.8"/><circle cx="71.25" cy="133.03" r="0.46" fill="#e88a2a" opacity="0.8"/><circle cx="69.53" cy="134.56" r="0.46" fill="#d8c25a" opacity="0.8"/><circle cx="67.49" cy="135.63" r="0.46" fill="#2f8f6a" opacity="0.8"/><circle cx="65.25" cy="136.18" r="0.46" fill="#e0b93a" opacity="0.8"/><circle cx="62.95" cy="136.18" r="0.46" fill="#c8442f" opacity="0.8"/><circle cx="60.71" cy="135.63" r="0.46" fill="#2aa58a" opacity="0.8"/><circle cx="58.67" cy="134.56" r="0.46" fill="#e88a2a" opacity="0.8"/><circle cx="56.95" cy="133.03" r="0.46" fill="#d8c25a" opacity="0.8"/><circle cx="55.64" cy="131.14" r="0.46" fill="#2f8f6a" opacity="0.8"/><circle cx="54.83" cy="128.99" r="0.46" fill="#e0b93a" opacity="0.8"/><circle cx="54.55" cy="126.70" r="0.46" fill="#c8442f" opacity="0.8"/><circle cx="54.83" cy="124.41" r="0.46" fill="#2aa58a" opacity="0.8"/><circle cx="55.64" cy="122.26" r="0.46" fill="#e88a2a" opacity="0.8"/><circle cx="56.95" cy="120.37" r="0.46" fill="#d8c25a" opacity="0.8"/><circle cx="58.67" cy="118.84" r="0.46" fill="#2f8f6a" opacity="0.8"/><circle cx="60.71" cy="117.77" r="0.46" fill="#e0b93a" opacity="0.8"/><circle cx="62.95" cy="117.22" r="0.46" fill="#c8442f" opacity="0.8"/><circle cx="65.25" cy="117.22" r="0.46" fill="#2aa58a" opacity="0.8"/><circle cx="67.49" cy="117.77" r="0.46" fill="#e88a2a" opacity="0.8"/><circle cx="69.53" cy="118.84" r="0.46" fill="#d8c25a" opacity="0.8"/><circle cx="71.25" cy="120.37" r="0.46" fill="#2f8f6a" opacity="0.8"/><circle cx="72.56" cy="122.26" r="0.46" fill="#e0b93a" opacity="0.8"/><circle cx="73.37" cy="124.41" r="0.46" fill="#c8442f" opacity="0.8"/>
<text x="64.1" y="124.9" font-size="2.7" fill="#e8f3ec" text-anchor="middle" font-weight="bold" font-style="normal" textLength="10.0" lengthAdjust="spacingAndGlyphs" >HAPPY</text>
<text x="64.1" y="128.7" font-size="2.7" fill="#e8f3ec" text-anchor="middle" font-weight="bold" font-style="normal" textLength="14.0" lengthAdjust="spacingAndGlyphs" >KWANZAA</text>
<circle cx="91.7" cy="45.1" r="10.3" fill="#d8433a"/>
<path d="M89.2 40h5.0v6.6l-2.5 4.8-2.5-4.8z" fill="url(#corng)"/>
<rect x="91.0" y="40" width="1.4" height="5" rx="0.6" fill="#efe066"/>
<circle cx="91.7" cy="72.1" r="10.3" fill="#f8ddb0"/>
<circle cx="91.7" cy="72.1" r="9.55" fill="none" stroke="#1c2a1c" stroke-width="1.7"/><circle cx="101.25" cy="72.10" r="0.46" fill="#e0b93a" opacity="0.8"/><circle cx="100.97" cy="74.39" r="0.46" fill="#c8442f" opacity="0.8"/><circle cx="100.16" cy="76.54" r="0.46" fill="#2aa58a" opacity="0.8"/><circle cx="98.85" cy="78.43" r="0.46" fill="#e88a2a" opacity="0.8"/><circle cx="97.13" cy="79.96" r="0.46" fill="#d8c25a" opacity="0.8"/><circle cx="95.09" cy="81.03" r="0.46" fill="#2f8f6a" opacity="0.8"/><circle cx="92.85" cy="81.58" r="0.46" fill="#e0b93a" opacity="0.8"/><circle cx="90.55" cy="81.58" r="0.46" fill="#c8442f" opacity="0.8"/><circle cx="88.31" cy="81.03" r="0.46" fill="#2aa58a" opacity="0.8"/><circle cx="86.27" cy="79.96" r="0.46" fill="#e88a2a" opacity="0.8"/><circle cx="84.55" cy="78.43" r="0.46" fill="#d8c25a" opacity="0.8"/><circle cx="83.24" cy="76.54" r="0.46" fill="#2f8f6a" opacity="0.8"/><circle cx="82.43" cy="74.39" r="0.46" fill="#e0b93a" opacity="0.8"/><circle cx="82.15" cy="72.10" r="0.46" fill="#c8442f" opacity="0.8"/><circle cx="82.43" cy="69.81" r="0.46" fill="#2aa58a" opacity="0.8"/><circle cx="83.24" cy="67.66" r="0.46" fill="#e88a2a" opacity="0.8"/><circle cx="84.55" cy="65.77" r="0.46" fill="#d8c25a" opacity="0.8"/><circle cx="86.27" cy="64.24" r="0.46" fill="#2f8f6a" opacity="0.8"/><circle cx="88.31" cy="63.17" r="0.46" fill="#e0b93a" opacity="0.8"/><circle cx="90.55" cy="62.62" r="0.46" fill="#c8442f" opacity="0.8"/><circle cx="92.85" cy="62.62" r="0.46" fill="#2aa58a" opacity="0.8"/><circle cx="95.09" cy="63.17" r="0.46" fill="#e88a2a" opacity="0.8"/><circle cx="97.13" cy="64.24" r="0.46" fill="#d8c25a" opacity="0.8"/><circle cx="98.85" cy="65.77" r="0.46" fill="#2f8f6a" opacity="0.8"/><circle cx="100.16" cy="67.66" r="0.46" fill="#e0b93a" opacity="0.8"/><circle cx="100.97" cy="69.81" r="0.46" fill="#c8442f" opacity="0.8"/>
<path d="M88.3 68.2h6.8c0 2.9-1.5 4.2-2.7 4.5v2.5l1.7 1.0v.7h-4.8v-.7l1.7-1.0v-2.5c-1.2-.3-2.7-1.6-2.7-4.5z" fill="#4a201c"/>
<circle cx="91.7" cy="99.8" r="10.3" fill="#f8d9a6"/>
<rect x="87.3" y="96.6" width="3.7" height="5.0" fill="#e0604a"/>
<rect x="91.10000000000001" y="95.6" width="1.3" height="6.0" fill="#3a2622"/>
<rect x="92.5" y="97.0" width="3.8" height="4.6" fill="#4fb39a"/>
<rect x="86.7" y="101.4" width="10.2" height="2.4" rx="0.5" fill="#4a2a22"/>
<circle cx="91.7" cy="126.7" r="10.3" fill="#1c7c61"/>
<circle cx="91.7" cy="126.7" r="9.55" fill="none" stroke="#1c2a1c" stroke-width="1.7"/><circle cx="101.25" cy="126.70" r="0.46" fill="#e0b93a" opacity="0.8"/><circle cx="100.97" cy="128.99" r="0.46" fill="#c8442f" opacity="0.8"/><circle cx="100.16" cy="131.14" r="0.46" fill="#2aa58a" opacity="0.8"/><circle cx="98.85" cy="133.03" r="0.46" fill="#e88a2a" opacity="0.8"/><circle cx="97.13" cy="134.56" r="0.46" fill="#d8c25a" opacity="0.8"/><circle cx="95.09" cy="135.63" r="0.46" fill="#2f8f6a" opacity="0.8"/><circle cx="92.85" cy="136.18" r="0.46" fill="#e0b93a" opacity="0.8"/><circle cx="90.55" cy="136.18" r="0.46" fill="#c8442f" opacity="0.8"/><circle cx="88.31" cy="135.63" r="0.46" fill="#2aa58a" opacity="0.8"/><circle cx="86.27" cy="134.56" r="0.46" fill="#e88a2a" opacity="0.8"/><circle cx="84.55" cy="133.03" r="0.46" fill="#d8c25a" opacity="0.8"/><circle cx="83.24" cy="131.14" r="0.46" fill="#2f8f6a" opacity="0.8"/><circle cx="82.43" cy="128.99" r="0.46" fill="#e0b93a" opacity="0.8"/><circle cx="82.15" cy="126.70" r="0.46" fill="#c8442f" opacity="0.8"/><circle cx="82.43" cy="124.41" r="0.46" fill="#2aa58a" opacity="0.8"/><circle cx="83.24" cy="122.26" r="0.46" fill="#e88a2a" opacity="0.8"/><circle cx="84.55" cy="120.37" r="0.46" fill="#d8c25a" opacity="0.8"/><circle cx="86.27" cy="118.84" r="0.46" fill="#2f8f6a" opacity="0.8"/><circle cx="88.31" cy="117.77" r="0.46" fill="#e0b93a" opacity="0.8"/><circle cx="90.55" cy="117.22" r="0.46" fill="#c8442f" opacity="0.8"/><circle cx="92.85" cy="117.22" r="0.46" fill="#2aa58a" opacity="0.8"/><circle cx="95.09" cy="117.77" r="0.46" fill="#e88a2a" opacity="0.8"/><circle cx="97.13" cy="118.84" r="0.46" fill="#d8c25a" opacity="0.8"/><circle cx="98.85" cy="120.37" r="0.46" fill="#2f8f6a" opacity="0.8"/><circle cx="100.16" cy="122.26" r="0.46" fill="#e0b93a" opacity="0.8"/><circle cx="100.97" cy="124.41" r="0.46" fill="#c8442f" opacity="0.8"/>
<text x="91.7" y="124.9" font-size="2.7" fill="#e8f3ec" text-anchor="middle" font-weight="bold" font-style="normal" textLength="10.0" lengthAdjust="spacingAndGlyphs" >HAPPY</text>
<text x="91.7" y="128.7" font-size="2.7" fill="#e8f3ec" text-anchor="middle" font-weight="bold" font-style="normal" textLength="14.0" lengthAdjust="spacingAndGlyphs" >KWANZAA</text>
</g>
<text x="9.9" y="163.8" font-size="7.7" fill="#b5604c" text-anchor="start" font-weight="normal" font-style="normal" >3</text>
<rect x="17.8" y="154.4" width="93.2" height="119.3" rx="3" fill="#c65a36"/>
<svg x="19.5" y="155.8" width="90.2" height="116.5" viewBox="0 0 275 356" preserveAspectRatio="none"><use href="#slideg"/></svg>
<text x="9.7" y="291.7" font-size="7.7" fill="#3c3c3c" text-anchor="start" font-weight="normal" font-style="normal" >4</text>
<rect x="19.4" y="283.7" width="90" height="116" rx="2" fill="#ffffff" stroke="#ebebeb" stroke-width="0.7"/>
<rect x="24.8" y="288.1" width="65.3" height="0.6" fill="#c0c0c0" opacity="0.8"/>
<rect x="24.4" y="297.3" width="37.4" height="41.9" fill="#2b2a1c"/>
<path d="M24.4 297.3L25.6 299.4L24.4 301.5L25.6 303.6L24.4 305.7L25.6 307.8L24.4 309.9L25.6 312.0L24.4 314.1L25.6 316.2L24.4 318.3L25.6 320.4L24.4 322.5L25.6 324.6L24.4 326.7L25.6 328.8L24.4 330.9L25.6 333.0L24.4 335.1L25.6 337.2L24.4 339.2L27.3 339.2L26.1 337.1L27.3 335.0L26.1 332.9L27.3 330.8L26.1 328.7L27.3 326.6L26.1 324.5L27.3 322.4L26.1 320.3L27.3 318.2L26.1 316.1L27.3 314.0L26.1 311.9L27.3 309.8L26.1 307.7L27.3 305.6L26.1 303.5L27.3 301.4L26.1 299.3L27.3 297.3Z" fill="#1d6b55" opacity="0.92"/>
<path d="M27.3 297.3L28.5 299.4L27.3 301.5L28.5 303.6L27.3 305.7L28.5 307.8L27.3 309.9L28.5 312.0L27.3 314.1L28.5 316.2L27.3 318.3L28.5 320.4L27.3 322.5L28.5 324.6L27.3 326.7L28.5 328.8L27.3 330.9L28.5 333.0L27.3 335.1L28.5 337.2L27.3 339.2L30.9 339.2L29.7 337.1L30.9 335.0L29.7 332.9L30.9 330.8L29.7 328.7L30.9 326.6L29.7 324.5L30.9 322.4L29.7 320.3L30.9 318.2L29.7 316.1L30.9 314.0L29.7 311.9L30.9 309.8L29.7 307.7L30.9 305.6L29.7 303.5L30.9 301.4L29.7 299.3L30.9 297.3Z" fill="#c8962e" opacity="0.92"/>
<path d="M30.9 297.3L32.1 299.4L30.9 301.5L32.1 303.6L30.9 305.7L32.1 307.8L30.9 309.9L32.1 312.0L30.9 314.1L32.1 316.2L30.9 318.3L32.1 320.4L30.9 322.5L32.1 324.6L30.9 326.7L32.1 328.8L30.9 330.9L32.1 333.0L30.9 335.1L32.1 337.2L30.9 339.2L34.5 339.2L33.3 337.1L34.5 335.0L33.3 332.9L34.5 330.8L33.3 328.7L34.5 326.6L33.3 324.5L34.5 322.4L33.3 320.3L34.5 318.2L33.3 316.1L34.5 314.0L33.3 311.9L34.5 309.8L33.3 307.7L34.5 305.6L33.3 303.5L34.5 301.4L33.3 299.3L34.5 297.3Z" fill="#8a2b22" opacity="0.92"/>
<path d="M34.5 297.3L35.7 299.4L34.5 301.5L35.7 303.6L34.5 305.7L35.7 307.8L34.5 309.9L35.7 312.0L34.5 314.1L35.7 316.2L34.5 318.3L35.7 320.4L34.5 322.5L35.7 324.6L34.5 326.7L35.7 328.8L34.5 330.9L35.7 333.0L34.5 335.1L35.7 337.2L34.5 339.2L39.5 339.2L38.3 337.1L39.5 335.0L38.3 332.9L39.5 330.8L38.3 328.7L39.5 326.6L38.3 324.5L39.5 322.4L38.3 320.3L39.5 318.2L38.3 316.1L39.5 314.0L38.3 311.9L39.5 309.8L38.3 307.7L39.5 305.6L38.3 303.5L39.5 301.4L38.3 299.3L39.5 297.3Z" fill="#3f6f3a" opacity="0.92"/>
<path d="M39.5 297.3L40.7 299.4L39.5 301.5L40.7 303.6L39.5 305.7L40.7 307.8L39.5 309.9L40.7 312.0L39.5 314.1L40.7 316.2L39.5 318.3L40.7 320.4L39.5 322.5L40.7 324.6L39.5 326.7L40.7 328.8L39.5 330.9L40.7 333.0L39.5 335.1L40.7 337.2L39.5 339.2L43.9 339.2L42.7 337.1L43.9 335.0L42.7 332.9L43.9 330.8L42.7 328.7L43.9 326.6L42.7 324.5L43.9 322.4L42.7 320.3L43.9 318.2L42.7 316.1L43.9 314.0L42.7 311.9L43.9 309.8L42.7 307.7L43.9 305.6L42.7 303.5L43.9 301.4L42.7 299.3L43.9 297.3Z" fill="#22a088" opacity="0.92"/>
<path d="M43.9 297.3L45.1 299.4L43.9 301.5L45.1 303.6L43.9 305.7L45.1 307.8L43.9 309.9L45.1 312.0L43.9 314.1L45.1 316.2L43.9 318.3L45.1 320.4L43.9 322.5L45.1 324.6L43.9 326.7L45.1 328.8L43.9 330.9L45.1 333.0L43.9 335.1L45.1 337.2L43.9 339.2L47.5 339.2L46.3 337.1L47.5 335.0L46.3 332.9L47.5 330.8L46.3 328.7L47.5 326.6L46.3 324.5L47.5 322.4L46.3 320.3L47.5 318.2L46.3 316.1L47.5 314.0L46.3 311.9L47.5 309.8L46.3 307.7L47.5 305.6L46.3 303.5L47.5 301.4L46.3 299.3L47.5 297.3Z" fill="#c8962e" opacity="0.92"/>
<path d="M47.5 297.3L48.7 299.4L47.5 301.5L48.7 303.6L47.5 305.7L48.7 307.8L47.5 309.9L48.7 312.0L47.5 314.1L48.7 316.2L47.5 318.3L48.7 320.4L47.5 322.5L48.7 324.6L47.5 326.7L48.7 328.8L47.5 330.9L48.7 333.0L47.5 335.1L48.7 337.2L47.5 339.2L51.1 339.2L49.9 337.1L51.1 335.0L49.9 332.9L51.1 330.8L49.9 328.7L51.1 326.6L49.9 324.5L51.1 322.4L49.9 320.3L51.1 318.2L49.9 316.1L51.1 314.0L49.9 311.9L51.1 309.8L49.9 307.7L51.1 305.6L49.9 303.5L51.1 301.4L49.9 299.3L51.1 297.3Z" fill="#8a2b22" opacity="0.92"/>
<path d="M51.1 297.3L52.3 299.4L51.1 301.5L52.3 303.6L51.1 305.7L52.3 307.8L51.1 309.9L52.3 312.0L51.1 314.1L52.3 316.2L51.1 318.3L52.3 320.4L51.1 322.5L52.3 324.6L51.1 326.7L52.3 328.8L51.1 330.9L52.3 333.0L51.1 335.1L52.3 337.2L51.1 339.2L55.5 339.2L54.3 337.1L55.5 335.0L54.3 332.9L55.5 330.8L54.3 328.7L55.5 326.6L54.3 324.5L55.5 322.4L54.3 320.3L55.5 318.2L54.3 316.1L55.5 314.0L54.3 311.9L55.5 309.8L54.3 307.7L55.5 305.6L54.3 303.5L55.5 301.4L54.3 299.3L55.5 297.3Z" fill="#4a7a3c" opacity="0.92"/>
<path d="M55.5 297.3L56.7 299.4L55.5 301.5L56.7 303.6L55.5 305.7L56.7 307.8L55.5 309.9L56.7 312.0L55.5 314.1L56.7 316.2L55.5 318.3L56.7 320.4L55.5 322.5L56.7 324.6L55.5 326.7L56.7 328.8L55.5 330.9L56.7 333.0L55.5 335.1L56.7 337.2L55.5 339.2L59.8 339.2L58.6 337.1L59.8 335.0L58.6 332.9L59.8 330.8L58.6 328.7L59.8 326.6L58.6 324.5L59.8 322.4L58.6 320.3L59.8 318.2L58.6 316.1L59.8 314.0L58.6 311.9L59.8 309.8L58.6 307.7L59.8 305.6L58.6 303.5L59.8 301.4L58.6 299.3L59.8 297.3Z" fill="#22a088" opacity="0.92"/>
<path d="M59.8 297.3L61.0 299.4L59.8 301.5L61.0 303.6L59.8 305.7L61.0 307.8L59.8 309.9L61.0 312.0L59.8 314.1L61.0 316.2L59.8 318.3L61.0 320.4L59.8 322.5L61.0 324.6L59.8 326.7L61.0 328.8L59.8 330.9L61.0 333.0L59.8 335.1L61.0 337.2L59.8 339.2L62.0 339.2L60.8 337.1L62.0 335.0L60.8 332.9L62.0 330.8L60.8 328.7L62.0 326.6L60.8 324.5L62.0 322.4L60.8 320.3L62.0 318.2L60.8 316.1L62.0 314.0L60.8 311.9L62.0 309.8L60.8 307.7L62.0 305.6L60.8 303.5L62.0 301.4L60.8 299.3L62.0 297.3Z" fill="#c8962e" opacity="0.92"/>
<rect x="24.4" y="297.8" width="37.4" height="0.55" fill="#1a1a10" opacity="0.35"/>
<rect x="24.4" y="299.9" width="37.4" height="0.55" fill="#1a1a10" opacity="0.35"/>
<rect x="24.4" y="302.0" width="37.4" height="0.55" fill="#1a1a10" opacity="0.35"/>
<rect x="24.4" y="304.1" width="37.4" height="0.55" fill="#1a1a10" opacity="0.35"/>
<rect x="24.4" y="306.2" width="37.4" height="0.55" fill="#1a1a10" opacity="0.35"/>
<rect x="24.4" y="308.3" width="37.4" height="0.55" fill="#1a1a10" opacity="0.35"/>
<rect x="24.4" y="310.4" width="37.4" height="0.55" fill="#1a1a10" opacity="0.35"/>
<rect x="24.4" y="312.5" width="37.4" height="0.55" fill="#1a1a10" opacity="0.35"/>
<rect x="24.4" y="314.6" width="37.4" height="0.55" fill="#1a1a10" opacity="0.35"/>
<rect x="24.4" y="316.7" width="37.4" height="0.55" fill="#1a1a10" opacity="0.35"/>
<rect x="24.4" y="318.8" width="37.4" height="0.55" fill="#1a1a10" opacity="0.35"/>
<rect x="24.4" y="320.9" width="37.4" height="0.55" fill="#1a1a10" opacity="0.35"/>
<rect x="24.4" y="323.0" width="37.4" height="0.55" fill="#1a1a10" opacity="0.35"/>
<rect x="24.4" y="325.1" width="37.4" height="0.55" fill="#1a1a10" opacity="0.35"/>
<rect x="24.4" y="327.2" width="37.4" height="0.55" fill="#1a1a10" opacity="0.35"/>
<rect x="24.4" y="329.3" width="37.4" height="0.55" fill="#1a1a10" opacity="0.35"/>
<rect x="24.4" y="331.4" width="37.4" height="0.55" fill="#1a1a10" opacity="0.35"/>
<rect x="24.4" y="333.5" width="37.4" height="0.55" fill="#1a1a10" opacity="0.35"/>
<rect x="24.4" y="335.6" width="37.4" height="0.55" fill="#1a1a10" opacity="0.35"/>
<rect x="24.4" y="337.7" width="37.4" height="0.55" fill="#1a1a10" opacity="0.35"/>
<rect x="24.4" y="297.3" width="37.4" height="41.9" fill="#0a140a" opacity="0.24"/>
<rect x="28.0" y="321.2" width="30.2" height="15.2" fill="#f6dfb2"/>
<rect x="37.4" y="326.4" width="11.4" height="1.3" fill="#2a2018"/>
<rect x="38.7" y="330.5" width="8.8" height="0.8" fill="#5a4a3a"/>
<rect x="24.4" y="349.8" width="37.4" height="41.5" fill="#0c0c0c"/>
<rect x="24.4" y="349.8" width="37.4" height="20.6" fill="#1f917a"/>
<rect x="24.4" y="370.3" width="37.4" height="5.8" fill="#3a300f"/>
<rect x="24.4" y="370.7" width="37.4" height="1.0" fill="#a8882a"/>
<rect x="24.4" y="373.3" width="37.4" height="1.3" fill="#75601c"/>
<rect x="24.4" y="387.7" width="37.4" height="3.6" fill="#3a300f"/>
<rect x="24.4" y="388.4" width="37.4" height="1.1" fill="#a8882a"/>
<rect x="24.4" y="390.3" width="37.4" height="0.7" fill="#75601c"/>
<rect x="36.0" y="354.3" width="14.6" height="2.4" rx="1" fill="#2a2622"/>
<rect x="36.5" y="357.2" width="5.3" height="7.3" fill="#55c2a8"/>
<rect x="41.8" y="356.7" width="2.3" height="8.6" fill="#141414"/>
<rect x="44.4" y="357.2" width="5.3" height="6.6" fill="#a8584a"/>
<rect x="36.5" y="364.5" width="13.2" height="1.2" fill="#7fae48"/>
<rect x="37.4" y="378.7" width="11.4" height="1.3" fill="#f0f0f0"/>
<rect x="38.7" y="382.6" width="8.8" height="0.8" fill="#cfcfcf"/>
<path d="M22.8 297.3h3.2M24.4 295.7v3.2" stroke="#b8b8b8" stroke-width="0.4"/>
<path d="M60.2 297.3h3.2M61.8 295.7v3.2" stroke="#b8b8b8" stroke-width="0.4"/>
<path d="M22.8 339.2h3.2M24.4 337.6v3.2" stroke="#b8b8b8" stroke-width="0.4"/>
<path d="M60.2 339.2h3.2M61.8 337.6v3.2" stroke="#b8b8b8" stroke-width="0.4"/>
<path d="M22.8 349.8h3.2M24.4 348.2v3.2" stroke="#b8b8b8" stroke-width="0.4"/>
<path d="M60.2 349.8h3.2M61.8 348.2v3.2" stroke="#b8b8b8" stroke-width="0.4"/>
<path d="M22.8 391.3h3.2M24.4 389.7v3.2" stroke="#b8b8b8" stroke-width="0.4"/>
<path d="M60.2 391.3h3.2M61.8 389.7v3.2" stroke="#b8b8b8" stroke-width="0.4"/>
<rect x="66.7" y="297.3" width="37.4" height="41.9" fill="#2b2a1c"/>
<path d="M66.7 297.3L67.9 299.4L66.7 301.5L67.9 303.6L66.7 305.7L67.9 307.8L66.7 309.9L67.9 312.0L66.7 314.1L67.9 316.2L66.7 318.3L67.9 320.4L66.7 322.5L67.9 324.6L66.7 326.7L67.9 328.8L66.7 330.9L67.9 333.0L66.7 335.1L67.9 337.2L66.7 339.2L69.6 339.2L68.4 337.1L69.6 335.0L68.4 332.9L69.6 330.8L68.4 328.7L69.6 326.6L68.4 324.5L69.6 322.4L68.4 320.3L69.6 318.2L68.4 316.1L69.6 314.0L68.4 311.9L69.6 309.8L68.4 307.7L69.6 305.6L68.4 303.5L69.6 301.4L68.4 299.3L69.6 297.3Z" fill="#1d6b55" opacity="0.92"/>
<path d="M69.6 297.3L70.8 299.4L69.6 301.5L70.8 303.6L69.6 305.7L70.8 307.8L69.6 309.9L70.8 312.0L69.6 314.1L70.8 316.2L69.6 318.3L70.8 320.4L69.6 322.5L70.8 324.6L69.6 326.7L70.8 328.8L69.6 330.9L70.8 333.0L69.6 335.1L70.8 337.2L69.6 339.2L73.2 339.2L72.0 337.1L73.2 335.0L72.0 332.9L73.2 330.8L72.0 328.7L73.2 326.6L72.0 324.5L73.2 322.4L72.0 320.3L73.2 318.2L72.0 316.1L73.2 314.0L72.0 311.9L73.2 309.8L72.0 307.7L73.2 305.6L72.0 303.5L73.2 301.4L72.0 299.3L73.2 297.3Z" fill="#c8962e" opacity="0.92"/>
<path d="M73.2 297.3L74.4 299.4L73.2 301.5L74.4 303.6L73.2 305.7L74.4 307.8L73.2 309.9L74.4 312.0L73.2 314.1L74.4 316.2L73.2 318.3L74.4 320.4L73.2 322.5L74.4 324.6L73.2 326.7L74.4 328.8L73.2 330.9L74.4 333.0L73.2 335.1L74.4 337.2L73.2 339.2L76.8 339.2L75.6 337.1L76.8 335.0L75.6 332.9L76.8 330.8L75.6 328.7L76.8 326.6L75.6 324.5L76.8 322.4L75.6 320.3L76.8 318.2L75.6 316.1L76.8 314.0L75.6 311.9L76.8 309.8L75.6 307.7L76.8 305.6L75.6 303.5L76.8 301.4L75.6 299.3L76.8 297.3Z" fill="#8a2b22" opacity="0.92"/>
<path d="M76.8 297.3L78.0 299.4L76.8 301.5L78.0 303.6L76.8 305.7L78.0 307.8L76.8 309.9L78.0 312.0L76.8 314.1L78.0 316.2L76.8 318.3L78.0 320.4L76.8 322.5L78.0 324.6L76.8 326.7L78.0 328.8L76.8 330.9L78.0 333.0L76.8 335.1L78.0 337.2L76.8 339.2L81.8 339.2L80.6 337.1L81.8 335.0L80.6 332.9L81.8 330.8L80.6 328.7L81.8 326.6L80.6 324.5L81.8 322.4L80.6 320.3L81.8 318.2L80.6 316.1L81.8 314.0L80.6 311.9L81.8 309.8L80.6 307.7L81.8 305.6L80.6 303.5L81.8 301.4L80.6 299.3L81.8 297.3Z" fill="#3f6f3a" opacity="0.92"/>
<path d="M81.8 297.3L83.0 299.4L81.8 301.5L83.0 303.6L81.8 305.7L83.0 307.8L81.8 309.9L83.0 312.0L81.8 314.1L83.0 316.2L81.8 318.3L83.0 320.4L81.8 322.5L83.0 324.6L81.8 326.7L83.0 328.8L81.8 330.9L83.0 333.0L81.8 335.1L83.0 337.2L81.8 339.2L86.2 339.2L85.0 337.1L86.2 335.0L85.0 332.9L86.2 330.8L85.0 328.7L86.2 326.6L85.0 324.5L86.2 322.4L85.0 320.3L86.2 318.2L85.0 316.1L86.2 314.0L85.0 311.9L86.2 309.8L85.0 307.7L86.2 305.6L85.0 303.5L86.2 301.4L85.0 299.3L86.2 297.3Z" fill="#22a088" opacity="0.92"/>
<path d="M86.2 297.3L87.4 299.4L86.2 301.5L87.4 303.6L86.2 305.7L87.4 307.8L86.2 309.9L87.4 312.0L86.2 314.1L87.4 316.2L86.2 318.3L87.4 320.4L86.2 322.5L87.4 324.6L86.2 326.7L87.4 328.8L86.2 330.9L87.4 333.0L86.2 335.1L87.4 337.2L86.2 339.2L89.8 339.2L88.6 337.1L89.8 335.0L88.6 332.9L89.8 330.8L88.6 328.7L89.8 326.6L88.6 324.5L89.8 322.4L88.6 320.3L89.8 318.2L88.6 316.1L89.8 314.0L88.6 311.9L89.8 309.8L88.6 307.7L89.8 305.6L88.6 303.5L89.8 301.4L88.6 299.3L89.8 297.3Z" fill="#c8962e" opacity="0.92"/>
<path d="M89.8 297.3L91.0 299.4L89.8 301.5L91.0 303.6L89.8 305.7L91.0 307.8L89.8 309.9L91.0 312.0L89.8 314.1L91.0 316.2L89.8 318.3L91.0 320.4L89.8 322.5L91.0 324.6L89.8 326.7L91.0 328.8L89.8 330.9L91.0 333.0L89.8 335.1L91.0 337.2L89.8 339.2L93.4 339.2L92.2 337.1L93.4 335.0L92.2 332.9L93.4 330.8L92.2 328.7L93.4 326.6L92.2 324.5L93.4 322.4L92.2 320.3L93.4 318.2L92.2 316.1L93.4 314.0L92.2 311.9L93.4 309.8L92.2 307.7L93.4 305.6L92.2 303.5L93.4 301.4L92.2 299.3L93.4 297.3Z" fill="#8a2b22" opacity="0.92"/>
<path d="M93.4 297.3L94.6 299.4L93.4 301.5L94.6 303.6L93.4 305.7L94.6 307.8L93.4 309.9L94.6 312.0L93.4 314.1L94.6 316.2L93.4 318.3L94.6 320.4L93.4 322.5L94.6 324.6L93.4 326.7L94.6 328.8L93.4 330.9L94.6 333.0L93.4 335.1L94.6 337.2L93.4 339.2L97.8 339.2L96.6 337.1L97.8 335.0L96.6 332.9L97.8 330.8L96.6 328.7L97.8 326.6L96.6 324.5L97.8 322.4L96.6 320.3L97.8 318.2L96.6 316.1L97.8 314.0L96.6 311.9L97.8 309.8L96.6 307.7L97.8 305.6L96.6 303.5L97.8 301.4L96.6 299.3L97.8 297.3Z" fill="#4a7a3c" opacity="0.92"/>
<path d="M97.8 297.3L99.0 299.4L97.8 301.5L99.0 303.6L97.8 305.7L99.0 307.8L97.8 309.9L99.0 312.0L97.8 314.1L99.0 316.2L97.8 318.3L99.0 320.4L97.8 322.5L99.0 324.6L97.8 326.7L99.0 328.8L97.8 330.9L99.0 333.0L97.8 335.1L99.0 337.2L97.8 339.2L102.1 339.2L100.9 337.1L102.1 335.0L100.9 332.9L102.1 330.8L100.9 328.7L102.1 326.6L100.9 324.5L102.1 322.4L100.9 320.3L102.1 318.2L100.9 316.1L102.1 314.0L100.9 311.9L102.1 309.8L100.9 307.7L102.1 305.6L100.9 303.5L102.1 301.4L100.9 299.3L102.1 297.3Z" fill="#22a088" opacity="0.92"/>
<path d="M102.1 297.3L103.3 299.4L102.1 301.5L103.3 303.6L102.1 305.7L103.3 307.8L102.1 309.9L103.3 312.0L102.1 314.1L103.3 316.2L102.1 318.3L103.3 320.4L102.1 322.5L103.3 324.6L102.1 326.7L103.3 328.8L102.1 330.9L103.3 333.0L102.1 335.1L103.3 337.2L102.1 339.2L104.3 339.2L103.1 337.1L104.3 335.0L103.1 332.9L104.3 330.8L103.1 328.7L104.3 326.6L103.1 324.5L104.3 322.4L103.1 320.3L104.3 318.2L103.1 316.1L104.3 314.0L103.1 311.9L104.3 309.8L103.1 307.7L104.3 305.6L103.1 303.5L104.3 301.4L103.1 299.3L104.3 297.3Z" fill="#c8962e" opacity="0.92"/>
<rect x="66.7" y="297.8" width="37.4" height="0.55" fill="#1a1a10" opacity="0.35"/>
<rect x="66.7" y="299.9" width="37.4" height="0.55" fill="#1a1a10" opacity="0.35"/>
<rect x="66.7" y="302.0" width="37.4" height="0.55" fill="#1a1a10" opacity="0.35"/>
<rect x="66.7" y="304.1" width="37.4" height="0.55" fill="#1a1a10" opacity="0.35"/>
<rect x="66.7" y="306.2" width="37.4" height="0.55" fill="#1a1a10" opacity="0.35"/>
<rect x="66.7" y="308.3" width="37.4" height="0.55" fill="#1a1a10" opacity="0.35"/>
<rect x="66.7" y="310.4" width="37.4" height="0.55" fill="#1a1a10" opacity="0.35"/>
<rect x="66.7" y="312.5" width="37.4" height="0.55" fill="#1a1a10" opacity="0.35"/>
<rect x="66.7" y="314.6" width="37.4" height="0.55" fill="#1a1a10" opacity="0.35"/>
<rect x="66.7" y="316.7" width="37.4" height="0.55" fill="#1a1a10" opacity="0.35"/>
<rect x="66.7" y="318.8" width="37.4" height="0.55" fill="#1a1a10" opacity="0.35"/>
<rect x="66.7" y="320.9" width="37.4" height="0.55" fill="#1a1a10" opacity="0.35"/>
<rect x="66.7" y="323.0" width="37.4" height="0.55" fill="#1a1a10" opacity="0.35"/>
<rect x="66.7" y="325.1" width="37.4" height="0.55" fill="#1a1a10" opacity="0.35"/>
<rect x="66.7" y="327.2" width="37.4" height="0.55" fill="#1a1a10" opacity="0.35"/>
<rect x="66.7" y="329.3" width="37.4" height="0.55" fill="#1a1a10" opacity="0.35"/>
<rect x="66.7" y="331.4" width="37.4" height="0.55" fill="#1a1a10" opacity="0.35"/>
<rect x="66.7" y="333.5" width="37.4" height="0.55" fill="#1a1a10" opacity="0.35"/>
<rect x="66.7" y="335.6" width="37.4" height="0.55" fill="#1a1a10" opacity="0.35"/>
<rect x="66.7" y="337.7" width="37.4" height="0.55" fill="#1a1a10" opacity="0.35"/>
<rect x="66.7" y="297.3" width="37.4" height="41.9" fill="#0a140a" opacity="0.24"/>
<rect x="70.3" y="321.2" width="30.2" height="15.2" fill="#f6dfb2"/>
<rect x="79.7" y="326.4" width="11.4" height="1.3" fill="#2a2018"/>
<rect x="81.0" y="330.5" width="8.8" height="0.8" fill="#5a4a3a"/>
<rect x="66.7" y="349.8" width="37.4" height="41.5" fill="#0c0c0c"/>
<rect x="66.7" y="349.8" width="37.4" height="20.6" fill="#1f917a"/>
<rect x="66.7" y="370.3" width="37.4" height="5.8" fill="#3a300f"/>
<rect x="66.7" y="370.7" width="37.4" height="1.0" fill="#a8882a"/>
<rect x="66.7" y="373.3" width="37.4" height="1.3" fill="#75601c"/>
<rect x="66.7" y="387.7" width="37.4" height="3.6" fill="#3a300f"/>
<rect x="66.7" y="388.4" width="37.4" height="1.1" fill="#a8882a"/>
<rect x="66.7" y="390.3" width="37.4" height="0.7" fill="#75601c"/>
<rect x="78.3" y="354.3" width="14.6" height="2.4" rx="1" fill="#2a2622"/>
<rect x="78.8" y="357.2" width="5.3" height="7.3" fill="#55c2a8"/>
<rect x="84.1" y="356.7" width="2.3" height="8.6" fill="#141414"/>
<rect x="86.7" y="357.2" width="5.3" height="6.6" fill="#a8584a"/>
<rect x="78.8" y="364.5" width="13.2" height="1.2" fill="#7fae48"/>
<rect x="79.7" y="378.7" width="11.4" height="1.3" fill="#f0f0f0"/>
<rect x="81.0" y="382.6" width="8.8" height="0.8" fill="#cfcfcf"/>
<path d="M65.1 297.3h3.2M66.7 295.7v3.2" stroke="#b8b8b8" stroke-width="0.4"/>
<path d="M102.5 297.3h3.2M104.1 295.7v3.2" stroke="#b8b8b8" stroke-width="0.4"/>
<path d="M65.1 339.2h3.2M66.7 337.6v3.2" stroke="#b8b8b8" stroke-width="0.4"/>
<path d="M102.5 339.2h3.2M104.1 337.6v3.2" stroke="#b8b8b8" stroke-width="0.4"/>
<path d="M65.1 349.8h3.2M66.7 348.2v3.2" stroke="#b8b8b8" stroke-width="0.4"/>
<path d="M102.5 349.8h3.2M104.1 348.2v3.2" stroke="#b8b8b8" stroke-width="0.4"/>
<path d="M65.1 391.3h3.2M66.7 389.7v3.2" stroke="#b8b8b8" stroke-width="0.4"/>
<path d="M102.5 391.3h3.2M104.1 389.7v3.2" stroke="#b8b8b8" stroke-width="0.4"/>
<text x="9.8" y="419.5" font-size="7.7" fill="#3c3c3c" text-anchor="start" font-weight="normal" font-style="normal" >5</text>
<rect x="19.4" y="411.4" width="90" height="60" rx="2" fill="#ffffff" stroke="#ebebeb" stroke-width="0.7"/>
<rect x="24.7" y="415.6" width="65.3" height="0.6" fill="#c8c8c8" opacity="0.8"/>
<circle cx="42" cy="443.4" r="20.9" fill="#d9473c"/>
<circle cx="42" cy="443.4" r="17.3" fill="none" stroke="#c23b32" stroke-width="0.8"/>
<path d="M37.2 434.6c1.4 1 2.4 2.6 2.8 4.6l-.2 12h4.4l-.2-12c.4-2 1.4-3.6 2.8-4.6l-.6 6.4v10.2h-8.4v-10.2z" fill="#25a085"/>
<ellipse cx="42" cy="439.4" rx="2.6" ry="5.2" fill="#ecd04a"/>
<rect x="39.8" y="442" width="4.4" height="9" fill="#7fc46a"/>
<circle cx="86.3" cy="443.4" r="20.6" fill="#1c241a"/>
<polygon points="106.6,443.4 103.4,442.1 103.4,444.7" fill="#e8c23c" />
<polygon points="106.1,447.9 103.3,445.9 102.7,448.5" fill="#d4442f" />
<polygon points="104.6,452.2 102.3,449.6 101.1,452.0" fill="#2aa58a" />
<polygon points="102.2,456.1 100.5,453.0 98.9,455.1" fill="#f09a2a" />
<polygon points="99.0,459.3 98.0,456.0 95.9,457.6" fill="#e8d060" />
<polygon points="95.1,461.7 94.9,458.2 92.5,459.4" fill="#2f9f78" />
<polygon points="90.8,463.2 91.4,459.8 88.8,460.4" fill="#e8c23c" />
<polygon points="86.3,463.7 87.6,460.5 85.0,460.5" fill="#d4442f" />
<polygon points="81.8,463.2 83.8,460.4 81.2,459.8" fill="#2aa58a" />
<polygon points="77.5,461.7 80.1,459.4 77.7,458.2" fill="#f09a2a" />
<polygon points="73.6,459.3 76.7,457.6 74.6,456.0" fill="#e8d060" />
<polygon points="70.4,456.1 73.7,455.1 72.1,453.0" fill="#2f9f78" />
<polygon points="68.0,452.2 71.5,452.0 70.3,449.6" fill="#e8c23c" />
<polygon points="66.5,447.9 69.9,448.5 69.3,445.9" fill="#d4442f" />
<polygon points="66.0,443.4 69.2,444.7 69.2,442.1" fill="#2aa58a" />
<polygon points="66.5,438.9 69.3,440.9 69.9,438.3" fill="#f09a2a" />
<polygon points="68.0,434.6 70.3,437.2 71.5,434.8" fill="#e8d060" />
<polygon points="70.4,430.7 72.1,433.8 73.7,431.7" fill="#2f9f78" />
<polygon points="73.6,427.5 74.6,430.8 76.7,429.2" fill="#e8c23c" />
<polygon points="77.5,425.1 77.7,428.6 80.1,427.4" fill="#d4442f" />
<polygon points="81.8,423.6 81.2,427.0 83.8,426.4" fill="#2aa58a" />
<polygon points="86.3,423.1 85.0,426.3 87.6,426.3" fill="#f09a2a" />
<polygon points="90.8,423.6 88.8,426.4 91.4,427.0" fill="#e8d060" />
<polygon points="95.1,425.1 92.5,427.4 94.9,428.6" fill="#2f9f78" />
<polygon points="99.0,427.5 95.9,429.2 98.0,430.8" fill="#e8c23c" />
<polygon points="102.2,430.7 98.9,431.7 100.5,433.8" fill="#d4442f" />
<polygon points="104.6,434.6 101.1,434.8 102.3,437.2" fill="#2aa58a" />
<polygon points="106.1,438.9 102.7,438.3 103.3,440.9" fill="#f09a2a" />
<circle cx="86.3" cy="443.4" r="16.2" fill="#1f8a70"/>
<text x="86.5" y="442.4" font-size="7.7" fill="#f0e8c2" text-anchor="middle" font-weight="bold" font-style="normal" textLength="20.8" lengthAdjust="spacingAndGlyphs" >HAPPY</text>
<text x="86.6" y="449.7" font-size="7.7" fill="#f0e8c2" text-anchor="middle" font-weight="bold" font-style="normal" textLength="28.4" lengthAdjust="spacingAndGlyphs" >KWANZAA</text>
<path d="M129.6 44.2H140.2a3 3 0 0 1 3 3v8.2a3 3 0 0 1 -3 3H129.6" fill="#f5f5f5" stroke="#e3e3e3" stroke-width="1.1"/><rect x="128.7" y="44.8" width="2.2" height="13" fill="#f5f5f5"/>
<rect x="131.2" y="48.2" width="7.4" height="6.6" rx="1" fill="none" stroke="#8a8a8a" stroke-width="0.7"/>
<path d="M133.4 48.4v6.2M134.8 51.5h2.6" stroke="#8a8a8a" stroke-width="0.7"/>
<text x="135.4" y="444.1" font-size="7.4" fill="#8c8c8c" text-anchor="start" font-weight="normal" font-style="normal" textLength="58.8" lengthAdjust="spacingAndGlyphs" >Click to add notes</text>
</svg>
<div id="scroll"></div>
<div id="slidewrap"><svg width="275" height="356" viewBox="0 0 275 356"><use href="#slideg"/></svg></div>
<div id="topbar"></div>
<div id="ribbon"></div>
<svg id="chrome" width="779" height="40" viewBox="0 0 779 40">
<text x="10.8" y="9.8" font-size="7.4" fill="#424242" text-anchor="start" font-weight="normal" font-style="normal" textLength="10.2" lengthAdjust="spacingAndGlyphs" >File</text>
<text x="64.2" y="9.8" font-size="7.4" fill="#424242" text-anchor="start" font-weight="normal" font-style="normal" textLength="17.4" lengthAdjust="spacingAndGlyphs" >Insert</text>
<text x="94.5" y="9.8" font-size="7.4" fill="#424242" text-anchor="start" font-weight="normal" font-style="normal" textLength="16.5" lengthAdjust="spacingAndGlyphs" >Draw</text>
<text x="123.7" y="9.8" font-size="7.4" fill="#424242" text-anchor="start" font-weight="normal" font-style="normal" textLength="20.8" lengthAdjust="spacingAndGlyphs" >Design</text>
<text x="158.7" y="9.8" font-size="7.4" fill="#424242" text-anchor="start" font-weight="normal" font-style="normal" textLength="33.1" lengthAdjust="spacingAndGlyphs" >Transitions</text>
<text x="206.2" y="9.8" font-size="7.4" fill="#424242" text-anchor="start" font-weight="normal" font-style="normal" textLength="35.6" lengthAdjust="spacingAndGlyphs" >Animations</text>
<text x="255.5" y="9.8" font-size="7.4" fill="#424242" text-anchor="start" font-weight="normal" font-style="normal" textLength="34.8" lengthAdjust="spacingAndGlyphs" >Slide Show</text>
<text x="303.2" y="9.8" font-size="7.4" fill="#424242" text-anchor="start" font-weight="normal" font-style="normal" textLength="22.1" lengthAdjust="spacingAndGlyphs" >Review</text>
<text x="338.8" y="9.8" font-size="7.4" fill="#424242" text-anchor="start" font-weight="normal" font-style="normal" textLength="14.2" lengthAdjust="spacingAndGlyphs" >View</text>
<text x="365.7" y="9.8" font-size="7.4" fill="#424242" text-anchor="start" font-weight="normal" font-style="normal" textLength="14.8" lengthAdjust="spacingAndGlyphs" >Help</text>
<text x="32.0" y="9.8" font-size="7.4" fill="#242424" text-anchor="start" font-weight="bold" font-style="normal" textLength="19.3" lengthAdjust="spacingAndGlyphs" >Home</text>
<rect x="32" y="12.9" width="19.6" height="1.35" rx="0.6" fill="#c2553a"/>
<rect x="727.7" y="1.6" width="48" height="11.4" rx="2" fill="#ffffff" stroke="#dcdcdc" stroke-width="0.7"/>
<path d="M733 5.0h5.2a0.8 0.8 0 0 1 0.8 0.8v3.0a0.8 0.8 0 0 1 -0.8 0.8h-2.6l-1.6 1.4v-1.4h-1a0.8 0.8 0 0 1 -0.8 -0.8v-3.0a0.8 0.8 0 0 1 0.8 -0.8z" fill="none" stroke="#424242" stroke-width="0.75"/>
<text x="741.9" y="10.0" font-size="7.2" fill="#424242" text-anchor="start" font-weight="normal" font-style="normal" textLength="29.1" lengthAdjust="spacingAndGlyphs" >Comments</text>
<path d="M13.2 23.6v3.5h3.5" fill="none" stroke="#444" stroke-width="0.95" stroke-linecap="round" stroke-linejoin="round"/>
<path d="M13.4 27.0c1.6-2.6 4.6-3.0 5.9-1.4 1.4 1.7 .4 3.6-1.2 4.5l-2.6 1.4" fill="none" stroke="#444" stroke-width="0.95" stroke-linecap="round"/>
<path d="M26.6 26.5L28.6 28.6L30.5 26.5" fill="none" stroke="#444444" stroke-width="0.9" stroke-linecap="round" stroke-linejoin="round"/>
<rect x="40" y="24.1" width="5.6" height="7.3" rx="1" fill="none" stroke="#444" stroke-width="0.9"/>
<rect x="41.4" y="23.2" width="2.8" height="1.5" rx="0.6" fill="#fff" stroke="#444" stroke-width="0.7"/>
<path d="M51.0 26.5L53.0 28.6L54.9 26.5" fill="none" stroke="#444444" stroke-width="0.9" stroke-linecap="round" stroke-linejoin="round"/>
<rect x="63.9" y="23.5" width="4.8" height="3.6" rx="0.8" fill="#fbe9c0" stroke="#f3d9a0" stroke-width="0.5"/>
<path d="M65.1 27.3h2.4l-0.5 3.6h-1.4z" fill="#dfe6ee" stroke="#c9d4e2" stroke-width="0.4"/>
<path d="M79.6 25.2h6.4M81.5 25.0v-1.0h2.6v1.0M80.5 25.4l.5 5.6h3.6l.5-5.6" fill="none" stroke="#f4bcbc" stroke-width="0.8" stroke-linecap="round" stroke-linejoin="round"/>
<path d="M81 25.6h3.6l-.4 5h-2.8z" fill="#fbe3e3"/>
<rect x="92.55" y="21.7" width="0.7" height="11.6" fill="#dadada"/>
<rect x="99.3" y="24.3" width="7.6" height="6.0" rx="1.1" fill="none" stroke="#555" stroke-width="0.85"/>
<circle cx="106.1" cy="30.0" r="2.2" fill="#3fae57" stroke="#fff" stroke-width="0.5"/>
<path d="M105.1 30h2M106.1 29v2" stroke="#fff" stroke-width="0.5"/>
<text x="111.2" y="30.1" font-size="7.4" fill="#3a3a3a" text-anchor="start" font-weight="normal" font-style="normal" textLength="30.8" lengthAdjust="spacingAndGlyphs" >New Slide</text>
<path d="M146.8 26.6L148.9 28.7L151.1 26.6" fill="none" stroke="#444444" stroke-width="0.9" stroke-linecap="round" stroke-linejoin="round"/>
<rect x="160.3" y="24.4" width="7.4" height="6.2" rx="1.1" fill="#cfe3f7" stroke="#5b8fcf" stroke-width="0.8"/>
<rect x="161.3" y="25.3" width="5.4" height="1.6" fill="#7fb0e6"/>
<path d="M171.8 26.6L173.8 28.7L175.7 26.6" fill="none" stroke="#444444" stroke-width="0.9" stroke-linecap="round" stroke-linejoin="round"/>
<path d="M183.6 27.6c1.4-2.0 2.8-2.9 4.2-2.9s2.8 .9 4.2 2.9" fill="none" stroke="#5a5a5a" stroke-width="0.8" stroke-linecap="round"/>
<circle cx="187.8" cy="28.3" r="1.7" fill="none" stroke="#5a5a5a" stroke-width="0.8"/>
<path d="M183.4 23.3l8.6 8.2" stroke="#5a5a5a" stroke-width="0.8" stroke-linecap="round"/>
<rect x="197.45" y="21.7" width="0.7" height="11.6" fill="#dadada"/>
<rect x="200" y="21" width="65.6" height="13" rx="1.5" fill="#f5f5f5"/>
<path d="M257.5 26.5L259.4 28.6L261.4 26.5" fill="none" stroke="#c2c2c2" stroke-width="0.9" stroke-linecap="round" stroke-linejoin="round"/>
<rect x="266" y="21" width="28.4" height="13" rx="1.5" fill="#fbfbfb" stroke="#f0f0f0" stroke-width="0.5"/>
<path d="M286.2 26.5L288.2 28.6L290.3 26.5" fill="none" stroke="#a6a6a6" stroke-width="0.9" stroke-linecap="round" stroke-linejoin="round"/>
<text x="303.0" y="31.1" font-size="9" fill="#b0b0b0" text-anchor="start" font-weight="normal" font-style="normal" >A</text>
<path d="M308.7 25.3l1-1 1 1" fill="none" stroke="#b0b0b0" stroke-width="0.6"/>
<text x="319.4" y="31.1" font-size="8" fill="#b0b0b0" text-anchor="start" font-weight="normal" font-style="normal" >A</text>
<path d="M324.7 24.5l1 1 1-1" fill="none" stroke="#9fc3ea" stroke-width="0.6"/>
<text x="337.4" y="30.9" font-size="8.8" fill="#a6a6a6" text-anchor="start" font-weight="bold" font-style="normal" >B</text>
<path d="M355.0 24.2h3.6M353.4 31h3.6M357 24.2l-1.9 6.8" stroke="#bdbdbd" stroke-width="0.75" fill="none"/>
<path d="M370.4 24v3.6a2 2 0 0 0 4 0V24M369.8 31.3h5.2" stroke="#bdbdbd" stroke-width="0.75" fill="none"/>
<path d="M385.3 24.4l1.6 4.4h3.6l1.7-4.4" fill="none" stroke="#b5b5b5" stroke-width="0.8"/>
<path d="M386.2 28.2h3.6l-0.4 2.8h-2.9z" fill="#eef07a"/>
<path d="M398.6 26.5L400.6 28.6L402.5 26.5" fill="none" stroke="#bcbcbc" stroke-width="0.9" stroke-linecap="round" stroke-linejoin="round"/>
<text x="412.3" y="28.3" font-size="7.4" fill="#b5b5b5" text-anchor="start" font-weight="normal" font-style="normal" >A</text>
<rect x="411.8" y="28.6" width="7.3" height="2.7" rx="0.4" fill="#f08f8f"/>
<path d="M424.6 26.5L426.7 28.6L428.8 26.5" fill="none" stroke="#bcbcbc" stroke-width="0.9" stroke-linecap="round" stroke-linejoin="round"/>
<circle cx="437.7" cy="27.2" r="0.65" fill="#9a9a9a"/>
<circle cx="441.6" cy="27.2" r="0.65" fill="#9a9a9a"/>
<circle cx="445.4" cy="27.2" r="0.65" fill="#9a9a9a"/>
<rect x="452.15" y="21.7" width="0.7" height="11.6" fill="#dadada"/>
<circle cx="460.1" cy="24.0" r="0.7" fill="#a9c8ec"/>
<rect x="462.3" y="23.65" width="4.9" height="0.7" fill="#cfcfcf"/>
<circle cx="460.1" cy="27.2" r="0.7" fill="#a9c8ec"/>
<rect x="462.3" y="26.849999999999998" width="4.9" height="0.7" fill="#cfcfcf"/>
<circle cx="460.1" cy="30.4" r="0.7" fill="#a9c8ec"/>
<rect x="462.3" y="30.049999999999997" width="4.9" height="0.7" fill="#cfcfcf"/>
<path d="M472.4 26.5L474.5 28.6L476.6 26.5" fill="none" stroke="#bcbcbc" stroke-width="0.9" stroke-linecap="round" stroke-linejoin="round"/>
<rect x="485.5" y="22.8" width="0.8" height="8.8" fill="#cfe0f4"/>
<rect x="488.2" y="23.65" width="5.2" height="0.7" fill="#cfcfcf"/>
<rect x="488.2" y="26.849999999999998" width="5.2" height="0.7" fill="#cfcfcf"/>
<rect x="488.2" y="30.049999999999997" width="5.2" height="0.7" fill="#cfcfcf"/>
<path d="M499.0 26.5L501.0 28.6L503.1 26.5" fill="none" stroke="#bcbcbc" stroke-width="0.9" stroke-linecap="round" stroke-linejoin="round"/>
<rect x="511.5" y="23.55" width="7.1" height="0.9" rx="0.3" fill="#4a4a4a"/>
<rect x="511.5" y="26.75" width="8.4" height="0.9" rx="0.3" fill="#4a4a4a"/>
<rect x="511.5" y="29.95" width="5.2" height="0.9" rx="0.3" fill="#4a4a4a"/>
<path d="M524.0 26.5L526.1 28.6L528.2 26.5" fill="none" stroke="#333" stroke-width="1.0" stroke-linecap="round" stroke-linejoin="round"/>
<rect x="535.5999999999999" y="23.6" width="7" height="0.7" fill="#cdcdcd"/>
<rect x="535.5999999999999" y="30.0" width="7" height="0.7" fill="#cdcdcd"/>
<rect x="535.5999999999999" y="26.8" width="3.4" height="0.7" fill="#cdcdcd"/>
<path d="M542.6999999999999 25.6l-1.6 1.6 1.6 1.6" fill="none" stroke="#c0d6f0" stroke-width="0.7"/>
<rect x="552.3" y="23.6" width="7" height="0.7" fill="#cdcdcd"/>
<rect x="552.3" y="30.0" width="7" height="0.7" fill="#cdcdcd"/>
<rect x="556.0" y="26.8" width="3.4" height="0.7" fill="#cdcdcd"/>
<path d="M552.4 25.6l1.6 1.6 -1.6 1.6" fill="none" stroke="#c0d6f0" stroke-width="0.7"/>
<rect x="568.4" y="23.6" width="4.6" height="0.7" fill="#cdcdcd"/>
<rect x="568.4" y="25.9" width="4.6" height="0.7" fill="#cdcdcd"/>
<rect x="568.4" y="28.2" width="4.6" height="0.7" fill="#cdcdcd"/>
<rect x="568.4" y="30.5" width="4.6" height="0.7" fill="#cdcdcd"/>
<path d="M574 24.6l1-1 1 1M574 30.2l1 1 1-1" fill="none" stroke="#9cc0ea" stroke-width="0.75"/>
<path d="M580.1 26.5L582.0 28.6L584.0 26.5" fill="none" stroke="#bcbcbc" stroke-width="0.9" stroke-linecap="round" stroke-linejoin="round"/>
<rect x="589.15" y="21.7" width="0.7" height="11.6" fill="#dadada"/>
<circle cx="598.7" cy="26.0" r="2.4" fill="#5a9bdc" stroke="#2f73c2" stroke-width="0.6"/>
<rect x="600.0" y="27.0" width="4.3" height="4.5" rx="1" fill="#fff" stroke="#3a3a3a" stroke-width="0.8"/>
<text x="607.0" y="30.1" font-size="7.4" fill="#3a3a3a" text-anchor="start" font-weight="normal" font-style="normal" textLength="22.3" lengthAdjust="spacingAndGlyphs" >Shapes</text>
<path d="M632.5 26.6L634.5 28.7L636.5 26.6" fill="none" stroke="#333" stroke-width="1.0" stroke-linecap="round" stroke-linejoin="round"/>
<path d="M648.0 23.4l-2.8 3.0 2.6 2.6 3.0-2.9zM648 23.4v-0.9" fill="none" stroke="#b5b5b5" stroke-width="0.75" stroke-linejoin="round"/>
<rect x="644.4" y="29.2" width="7.5" height="2.2" rx="0.4" fill="#f5c3a0"/>
<path d="M657.8 26.5L659.9 28.6L662.0 26.5" fill="none" stroke="#bcbcbc" stroke-width="0.9" stroke-linecap="round" stroke-linejoin="round"/>
<path d="M675.6 24.2h-4.2v5h5.4v-2.2" fill="none" stroke="#b5b5b5" stroke-width="0.75"/>
<path d="M673.6 27.6l4.0-4.0 1.0 1.0-4.0 4.0h-1z" fill="#fff" stroke="#b5b5b5" stroke-width="0.6"/>
<rect x="670.4" y="29.7" width="8.1" height="1.5" rx="0.3" fill="#8fb0e2"/>
<path d="M684.3 26.5L686.3 28.6L688.3 26.5" fill="none" stroke="#bcbcbc" stroke-width="0.9" stroke-linecap="round" stroke-linejoin="round"/>
<path d="M698.3 24.6l2.6-1 2.2 1.6-.6 2.2-2.8 .6-1.8-1.4z" fill="#e4effa" stroke="#b9d4ef" stroke-width="0.6"/>
<path d="M700.5 28.6l2.2 2.6 2.4-3.4" fill="none" stroke="#b9d4ef" stroke-width="0.7"/>
<path d="M709.8 26.5L711.8 28.6L713.7 26.5" fill="none" stroke="#bcbcbc" stroke-width="0.9" stroke-linecap="round" stroke-linejoin="round"/>
<rect x="723.2" y="25.6" width="3.6" height="3.9" fill="#f2b552"/>
<rect x="720.6" y="23.9" width="3.3" height="3.3" rx="0.7" fill="#fff" stroke="#4a4a4a" stroke-width="0.7"/>
<rect x="725.5" y="28.2" width="3.3" height="3.3" rx="0.7" fill="#fff" stroke="#4a4a4a" stroke-width="0.7"/>
<path d="M732.7 26.6L734.8 28.7L736.8 26.6" fill="none" stroke="#333" stroke-width="1.0" stroke-linecap="round" stroke-linejoin="round"/>
<rect x="741.95" y="21.7" width="0.7" height="11.6" fill="#dadada"/>
<circle cx="752.0" cy="26.5" r="2.5" fill="none" stroke="#444" stroke-width="0.85"/>
<path d="M753.9 28.5l2.2 2.4" stroke="#444" stroke-width="0.9" stroke-linecap="round"/>
<text x="760.0" y="30.0" font-size="7.4" fill="#3a3a3a" text-anchor="start" font-weight="normal" font-style="normal" textLength="12.5" lengthAdjust="spacingAndGlyphs" >Find</text>
<path d="M777.2 26.6L779.2 28.7L781.2 26.6" fill="none" stroke="#333" stroke-width="1.0" stroke-linecap="round" stroke-linejoin="round"/>
</svg>
</div>
</body></html>
